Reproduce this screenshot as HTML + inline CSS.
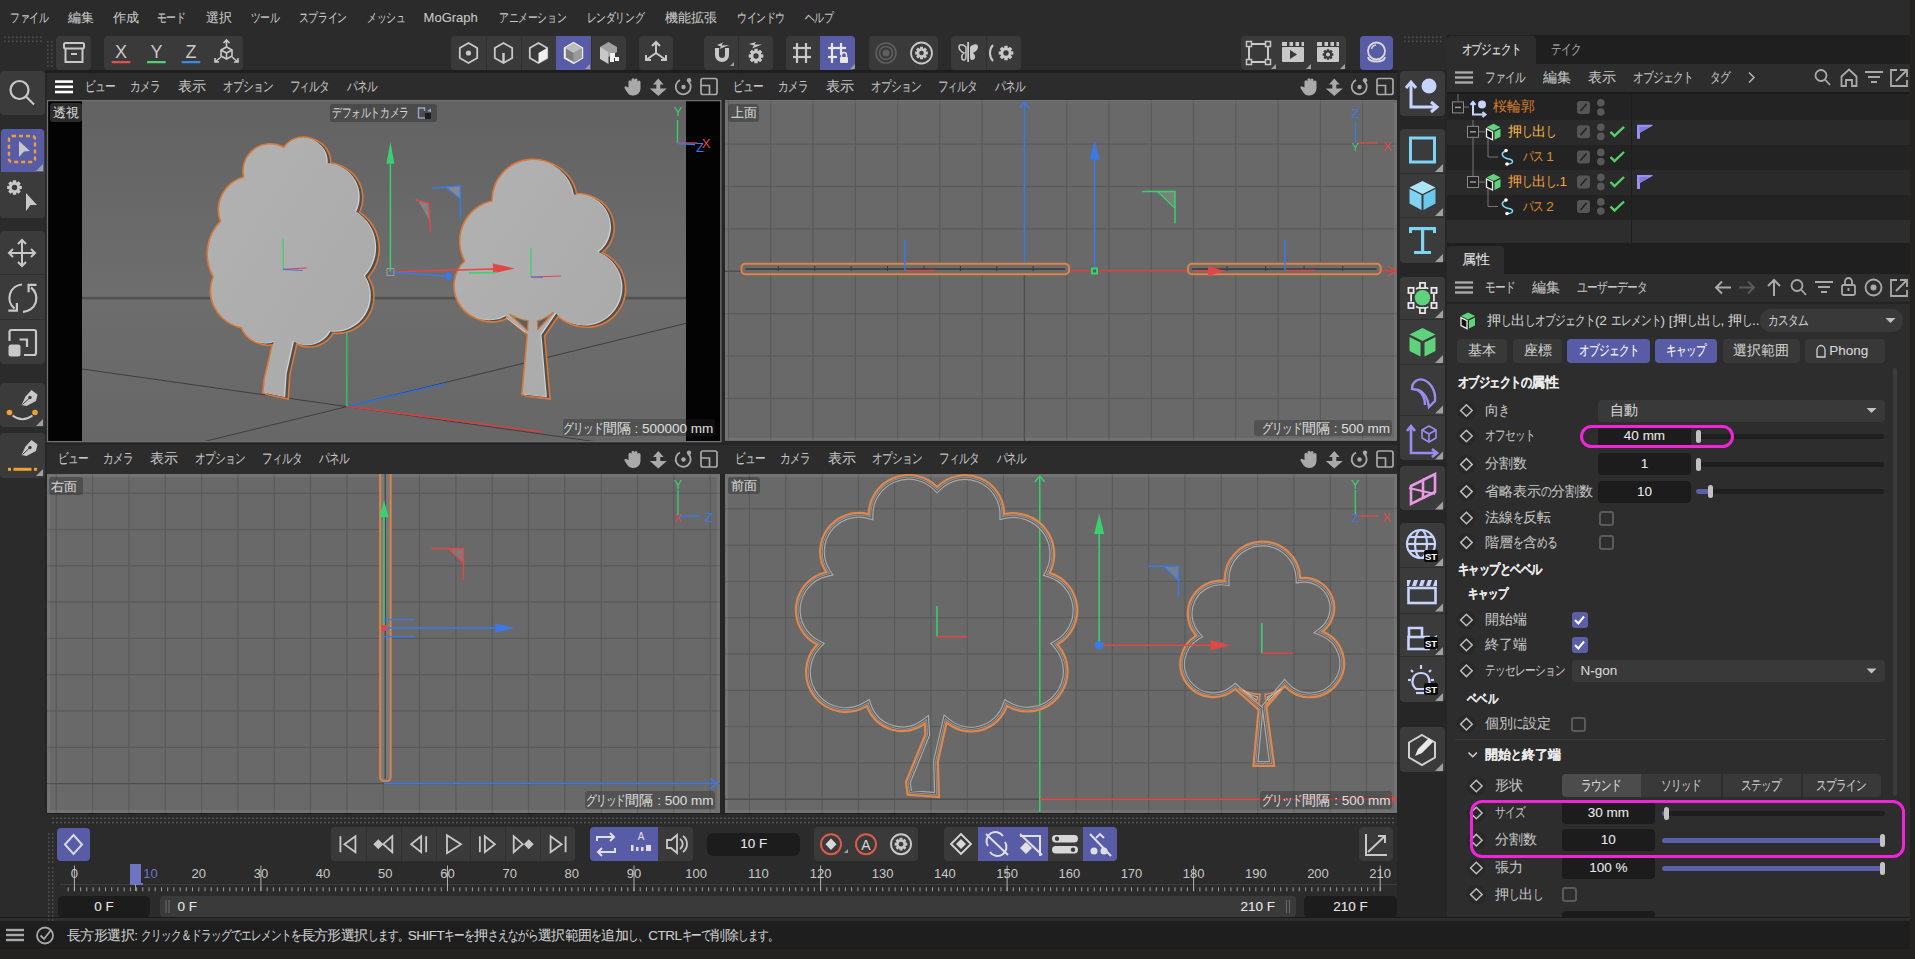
<!DOCTYPE html><html><head><meta charset="utf-8"><style>
html,body{margin:0;padding:0;width:1915px;height:959px;overflow:hidden;background:#2b2b2b;}
body{position:relative;font-family:"Liberation Sans",sans-serif;}
.t{position:absolute;height:20px;line-height:20px;white-space:nowrap;-webkit-text-stroke:0.08px currentColor;}
.kc{display:inline-block;font-style:normal;width:0.74em;transform:scaleX(0.76);transform-origin:0 50%;}
.b .kc{width:0.78em;transform:scaleX(0.8);}
svg.ov{position:absolute;left:0;top:0;}
</style></head><body>

<div class="t " style="left:10px;top:7.5px;color:#c9c9c9;font-size:13px;"><i class="kc">フ</i><i class="kc">ァ</i><i class="kc">イ</i><i class="kc">ル</i></div>
<div class="t " style="left:67.7px;top:7.5px;color:#c9c9c9;font-size:13px;">編集</div>
<div class="t " style="left:112.8px;top:7.5px;color:#c9c9c9;font-size:13px;">作成</div>
<div class="t " style="left:156.6px;top:7.5px;color:#c9c9c9;font-size:13px;"><i class="kc">モ</i><i class="kc">ー</i><i class="kc">ド</i></div>
<div class="t " style="left:205.5px;top:7.5px;color:#c9c9c9;font-size:13px;">選択</div>
<div class="t " style="left:250.6px;top:7.5px;color:#c9c9c9;font-size:13px;"><i class="kc">ツ</i><i class="kc">ー</i><i class="kc">ル</i></div>
<div class="t " style="left:298.7px;top:7.5px;color:#c9c9c9;font-size:13px;"><i class="kc">ス</i><i class="kc">プ</i><i class="kc">ラ</i><i class="kc">イ</i><i class="kc">ン</i></div>
<div class="t " style="left:367px;top:7.5px;color:#c9c9c9;font-size:13px;"><i class="kc">メ</i><i class="kc">ッ</i><i class="kc">シ</i><i class="kc">ュ</i></div>
<div class="t " style="left:423.6px;top:7.5px;color:#c9c9c9;font-size:13px;">MoGraph</div>
<div class="t " style="left:499px;top:7.5px;color:#c9c9c9;font-size:13px;"><i class="kc">ア</i><i class="kc">ニ</i><i class="kc">メ</i><i class="kc">ー</i><i class="kc">シ</i><i class="kc">ョ</i><i class="kc">ン</i></div>
<div class="t " style="left:586.6px;top:7.5px;color:#c9c9c9;font-size:13px;"><i class="kc">レ</i><i class="kc">ン</i><i class="kc">ダ</i><i class="kc">リ</i><i class="kc">ン</i><i class="kc">グ</i></div>
<div class="t " style="left:665px;top:7.5px;color:#c9c9c9;font-size:13px;">機能拡張</div>
<div class="t " style="left:737px;top:7.5px;color:#c9c9c9;font-size:13px;"><i class="kc">ウ</i><i class="kc">イ</i><i class="kc">ン</i><i class="kc">ド</i><i class="kc">ウ</i></div>
<div class="t " style="left:804.7px;top:7.5px;color:#c9c9c9;font-size:13px;"><i class="kc">ヘ</i><i class="kc">ル</i><i class="kc">プ</i></div>
<div style="position:absolute;left:56px;top:36px;width:35px;height:34px;background:#3a3a3a;border-radius:4px;"></div>
<div style="position:absolute;left:104px;top:36px;width:139px;height:34px;background:#3a3a3a;border-radius:4px;"></div>
<div style="position:absolute;left:451px;top:36px;width:175px;height:34px;background:#3a3a3a;border-radius:4px;"></div>
<div style="position:absolute;left:556px;top:36px;width:35px;height:34px;background:#585ca6;"></div>
<div style="position:absolute;left:639px;top:36px;width:34px;height:34px;background:#3a3a3a;border-radius:4px;"></div>
<div style="position:absolute;left:704px;top:36px;width:69px;height:34px;background:#3a3a3a;border-radius:4px;"></div>
<div style="position:absolute;left:786px;top:36px;width:69px;height:34px;background:#3a3a3a;border-radius:4px;"></div>
<div style="position:absolute;left:820px;top:36px;width:35px;height:34px;background:#585ca6;border-radius:0 4px 4px 0;"></div>
<div style="position:absolute;left:869px;top:36px;width:69px;height:34px;background:#3a3a3a;border-radius:4px;"></div>
<div style="position:absolute;left:951px;top:36px;width:70px;height:34px;background:#3a3a3a;border-radius:4px;"></div>
<div style="position:absolute;left:1241px;top:36px;width:105px;height:34px;background:#3a3a3a;border-radius:4px;"></div>
<div style="position:absolute;left:1360px;top:36px;width:33px;height:34px;background:#585ca6;border-radius:4px;"></div>
<div style="position:absolute;left:45px;top:70px;width:1355px;height:3px;background:#1e1e1e;"></div>
<div style="position:absolute;left:0px;top:71px;width:45px;height:44px;background:#3b3b3b;border-radius:4px;"></div>
<div style="position:absolute;left:0px;top:129px;width:45px;height:88.5px;background:#3b3b3b;border-radius:4px;"></div>
<div style="position:absolute;left:1px;top:129px;width:43px;height:43px;background:#585ca6;border-radius:4px 4px 0 0;"></div>
<div style="position:absolute;left:0px;top:231px;width:45px;height:133.2px;background:#3b3b3b;border-radius:4px;"></div>
<div style="position:absolute;left:0px;top:383px;width:45px;height:44.39999999999998px;background:#3b3b3b;border-radius:4px;"></div>
<div style="position:absolute;left:0px;top:433px;width:45px;height:45px;background:#3b3b3b;border-radius:4px;"></div>
<div style="position:absolute;left:45px;top:73px;width:1355px;height:745px;background:#262626;"></div>
<div style="position:absolute;left:47px;top:73px;width:1350px;height:27px;background:#2c2c2c;"></div>
<div style="position:absolute;left:47px;top:445px;width:1350px;height:29px;background:#2c2c2c;"></div>
<div class="t " style="left:85.2px;top:76.5px;color:#c4c4c4;font-size:13.5px;"><i class="kc">ビ</i><i class="kc">ュ</i><i class="kc">ー</i></div>
<div class="t " style="left:130.3px;top:76.5px;color:#c4c4c4;font-size:13.5px;"><i class="kc">カ</i><i class="kc">メ</i><i class="kc">ラ</i></div>
<div class="t " style="left:178px;top:76.5px;color:#c4c4c4;font-size:13.5px;">表示</div>
<div class="t " style="left:222.6px;top:76.5px;color:#c4c4c4;font-size:13.5px;"><i class="kc">オ</i><i class="kc">プ</i><i class="kc">シ</i><i class="kc">ョ</i><i class="kc">ン</i></div>
<div class="t " style="left:289.5px;top:76.5px;color:#c4c4c4;font-size:13.5px;"><i class="kc">フ</i><i class="kc">ィ</i><i class="kc">ル</i><i class="kc">タ</i></div>
<div class="t " style="left:347px;top:76.5px;color:#c4c4c4;font-size:13.5px;"><i class="kc">パ</i><i class="kc">ネ</i><i class="kc">ル</i></div>
<div class="t " style="left:733.2px;top:76.5px;color:#c4c4c4;font-size:13.5px;"><i class="kc">ビ</i><i class="kc">ュ</i><i class="kc">ー</i></div>
<div class="t " style="left:778.3px;top:76.5px;color:#c4c4c4;font-size:13.5px;"><i class="kc">カ</i><i class="kc">メ</i><i class="kc">ラ</i></div>
<div class="t " style="left:826px;top:76.5px;color:#c4c4c4;font-size:13.5px;">表示</div>
<div class="t " style="left:870.6px;top:76.5px;color:#c4c4c4;font-size:13.5px;"><i class="kc">オ</i><i class="kc">プ</i><i class="kc">シ</i><i class="kc">ョ</i><i class="kc">ン</i></div>
<div class="t " style="left:937.5px;top:76.5px;color:#c4c4c4;font-size:13.5px;"><i class="kc">フ</i><i class="kc">ィ</i><i class="kc">ル</i><i class="kc">タ</i></div>
<div class="t " style="left:995px;top:76.5px;color:#c4c4c4;font-size:13.5px;"><i class="kc">パ</i><i class="kc">ネ</i><i class="kc">ル</i></div>
<div class="t " style="left:57.6px;top:448.5px;color:#c4c4c4;font-size:13.5px;"><i class="kc">ビ</i><i class="kc">ュ</i><i class="kc">ー</i></div>
<div class="t " style="left:102.70000000000002px;top:448.5px;color:#c4c4c4;font-size:13.5px;"><i class="kc">カ</i><i class="kc">メ</i><i class="kc">ラ</i></div>
<div class="t " style="left:150.4px;top:448.5px;color:#c4c4c4;font-size:13.5px;">表示</div>
<div class="t " style="left:195.0px;top:448.5px;color:#c4c4c4;font-size:13.5px;"><i class="kc">オ</i><i class="kc">プ</i><i class="kc">シ</i><i class="kc">ョ</i><i class="kc">ン</i></div>
<div class="t " style="left:261.9px;top:448.5px;color:#c4c4c4;font-size:13.5px;"><i class="kc">フ</i><i class="kc">ィ</i><i class="kc">ル</i><i class="kc">タ</i></div>
<div class="t " style="left:319.4px;top:448.5px;color:#c4c4c4;font-size:13.5px;"><i class="kc">パ</i><i class="kc">ネ</i><i class="kc">ル</i></div>
<div class="t " style="left:734.7px;top:448.5px;color:#c4c4c4;font-size:13.5px;"><i class="kc">ビ</i><i class="kc">ュ</i><i class="kc">ー</i></div>
<div class="t " style="left:779.8px;top:448.5px;color:#c4c4c4;font-size:13.5px;"><i class="kc">カ</i><i class="kc">メ</i><i class="kc">ラ</i></div>
<div class="t " style="left:827.5px;top:448.5px;color:#c4c4c4;font-size:13.5px;">表示</div>
<div class="t " style="left:872.1px;top:448.5px;color:#c4c4c4;font-size:13.5px;"><i class="kc">オ</i><i class="kc">プ</i><i class="kc">シ</i><i class="kc">ョ</i><i class="kc">ン</i></div>
<div class="t " style="left:939.0px;top:448.5px;color:#c4c4c4;font-size:13.5px;"><i class="kc">フ</i><i class="kc">ィ</i><i class="kc">ル</i><i class="kc">タ</i></div>
<div class="t " style="left:996.5px;top:448.5px;color:#c4c4c4;font-size:13.5px;"><i class="kc">パ</i><i class="kc">ネ</i><i class="kc">ル</i></div>
<div style="position:absolute;left:1397px;top:70px;width:50px;height:850px;background:#262626;"></div>
<div style="position:absolute;left:1400px;top:71px;width:45px;height:44.5px;background:#3b3b3b;border-radius:4px;"></div>
<div style="position:absolute;left:1400px;top:129px;width:45px;height:134px;background:#3b3b3b;border-radius:4px;"></div>
<div style="position:absolute;left:1400px;top:277px;width:45px;height:183.39999999999998px;background:#3b3b3b;border-radius:4px;"></div>
<div style="position:absolute;left:1400px;top:466px;width:45px;height:44.39999999999998px;background:#3b3b3b;border-radius:4px;"></div>
<div style="position:absolute;left:1400px;top:523px;width:45px;height:179px;background:#3b3b3b;border-radius:4px;"></div>
<div style="position:absolute;left:1400px;top:727px;width:45px;height:45px;background:#3b3b3b;border-radius:4px;"></div>
<div style="position:absolute;left:1400px;top:173px;width:45px;height:1px;background:#2e2e2e;"></div>
<div style="position:absolute;left:1400px;top:217px;width:45px;height:1px;background:#2e2e2e;"></div>
<div style="position:absolute;left:1400px;top:319px;width:45px;height:1px;background:#2e2e2e;"></div>
<div style="position:absolute;left:1400px;top:364px;width:45px;height:1px;background:#2e2e2e;"></div>
<div style="position:absolute;left:1400px;top:414.6px;width:45px;height:1px;background:#2e2e2e;"></div>
<div style="position:absolute;left:1400px;top:567px;width:45px;height:1px;background:#2e2e2e;"></div>
<div style="position:absolute;left:1400px;top:612.5px;width:45px;height:1px;background:#2e2e2e;"></div>
<div style="position:absolute;left:1400px;top:656px;width:45px;height:1px;background:#2e2e2e;"></div>
<div style="position:absolute;left:1447px;top:35px;width:463px;height:29px;background:#1f1f1f;"></div>
<div style="position:absolute;left:1447px;top:36px;width:89px;height:28px;background:#2d2d2d;border-radius:4px 4px 0 0;"></div>
<div class="t " style="left:1461.5px;top:39.5px;color:#e6e6e6;font-size:13.5px;"><i class="kc">オ</i><i class="kc">ブ</i><i class="kc">ジ</i><i class="kc">ェ</i><i class="kc">ク</i><i class="kc">ト</i></div>
<div class="t " style="left:1551px;top:39.5px;color:#a8a8a8;font-size:13.5px;"><i class="kc">テ</i><i class="kc">イ</i><i class="kc">ク</i></div>
<div style="position:absolute;left:1447px;top:64px;width:463px;height:28px;background:#2d2d2d;"></div>
<div style="position:absolute;left:1910px;top:0px;width:5px;height:959px;background:#232221;"></div>
<div class="t " style="left:1484.6px;top:67.5px;color:#c4c4c4;font-size:13.5px;"><i class="kc">フ</i><i class="kc">ァ</i><i class="kc">イ</i><i class="kc">ル</i></div>
<div class="t " style="left:1543px;top:67.5px;color:#c4c4c4;font-size:13.5px;">編集</div>
<div class="t " style="left:1587.8px;top:67.5px;color:#c4c4c4;font-size:13.5px;">表示</div>
<div class="t " style="left:1632.6px;top:67.5px;color:#c4c4c4;font-size:13.5px;"><i class="kc">オ</i><i class="kc">ブ</i><i class="kc">ジ</i><i class="kc">ェ</i><i class="kc">ク</i><i class="kc">ト</i></div>
<div class="t " style="left:1710px;top:67.5px;color:#c4c4c4;font-size:13.5px;"><i class="kc">タ</i><i class="kc">グ</i></div>
<div style="position:absolute;left:1447px;top:92px;width:463px;height:1.5px;background:#1b1b1b;"></div>
<div style="position:absolute;left:1447px;top:93.5px;width:463px;height:26.0px;background:#232323;"></div>
<div style="position:absolute;left:1447px;top:119.5px;width:463px;height:25.0px;background:#2a2a2a;"></div>
<div style="position:absolute;left:1447px;top:144.5px;width:463px;height:25.0px;background:#232323;"></div>
<div style="position:absolute;left:1447px;top:169.5px;width:463px;height:25.0px;background:#2a2a2a;"></div>
<div style="position:absolute;left:1447px;top:194.5px;width:463px;height:25.0px;background:#232323;"></div>
<div style="position:absolute;left:1447px;top:219.5px;width:463px;height:23.5px;background:#2d2d2d;"></div>
<div style="position:absolute;left:1631px;top:93.5px;width:1px;height:149.5px;background:#1e1e1e;"></div>
<div style="position:absolute;left:1447px;top:243px;width:463px;height:3px;background:#1e1e1e;"></div>
<div class="t " style="left:1492.7px;top:97.4px;color:#cf7a30;font-size:13.5px;">桜輪郭</div>
<div class="t " style="left:1507.7px;top:121.80000000000001px;color:#f0b84a;font-size:13.5px;">押<i class="kc">し</i>出<i class="kc">し</i></div>
<div class="t " style="left:1522.6px;top:147px;color:#d9892e;font-size:13.5px;"><i class="kc">パ</i><i class="kc">ス</i> 1</div>
<div class="t " style="left:1507.7px;top:172px;color:#f0a340;font-size:13.5px;">押<i class="kc">し</i>出<i class="kc">し</i>.1</div>
<div class="t " style="left:1522.6px;top:196.5px;color:#d9892e;font-size:13.5px;"><i class="kc">パ</i><i class="kc">ス</i> 2</div>
<div style="position:absolute;left:1447px;top:246px;width:463px;height:28px;background:#1f1f1f;"></div>
<div style="position:absolute;left:1447px;top:246px;width:57px;height:28px;background:#2d2d2d;border-radius:4px 4px 0 0;"></div>
<div class="t " style="left:1461.5px;top:249.5px;color:#e6e6e6;font-size:13.5px;">属性</div>
<div style="position:absolute;left:1447px;top:274px;width:463px;height:643px;background:#2d2d2d;"></div>
<div style="position:absolute;left:1447px;top:302px;width:463px;height:1.5px;background:#232323;"></div>
<div class="t " style="left:1484.6px;top:277.5px;color:#c4c4c4;font-size:13.5px;"><i class="kc">モ</i><i class="kc">ー</i><i class="kc">ド</i></div>
<div class="t " style="left:1532px;top:277.5px;color:#c4c4c4;font-size:13.5px;">編集</div>
<div class="t " style="left:1577px;top:277.5px;color:#c4c4c4;font-size:13.5px;"><i class="kc">ユ</i><i class="kc">ー</i><i class="kc">ザ</i><i class="kc">ー</i><i class="kc">デ</i><i class="kc">ー</i><i class="kc">タ</i></div>
<div class="t " style="left:1487px;top:310.6px;color:#cfcfcf;font-size:13.5px;">押<i class="kc">し</i>出<i class="kc">し</i><i class="kc">オ</i><i class="kc">ブ</i><i class="kc">ジ</i><i class="kc">ェ</i><i class="kc">ク</i><i class="kc">ト</i>(2 <i class="kc">エ</i><i class="kc">レ</i><i class="kc">メ</i><i class="kc">ン</i><i class="kc">ト</i>) [押<i class="kc">し</i>出<i class="kc">し</i>, 押<i class="kc">し</i>..</div>
<div style="position:absolute;left:1760px;top:309px;width:143px;height:23px;background:#393939;border-radius:11px;"></div>
<div class="t " style="left:1768.3px;top:310.5px;color:#d0d0d0;font-size:13.5px;"><i class="kc">カ</i><i class="kc">ス</i><i class="kc">タ</i><i class="kc">ム</i></div>
<div style="position:absolute;left:1457.4px;top:339px;width:49.59999999999991px;height:24px;background:#383838;border-radius:4px;"></div>
<div class="t" style="left:1457.4px;width:49.59999999999991px;text-align:center;top:341px;color:#d0d0d0;font-size:13.5px;">基本</div>
<div style="position:absolute;left:1512.6px;top:339px;width:49.90000000000009px;height:24px;background:#383838;border-radius:4px;"></div>
<div class="t" style="left:1512.6px;width:49.90000000000009px;text-align:center;top:341px;color:#d0d0d0;font-size:13.5px;">座標</div>
<div style="position:absolute;left:1567.4px;top:339px;width:82.29999999999995px;height:24px;background:#585ca6;border-radius:4px;"></div>
<div class="t" style="left:1567.4px;width:82.29999999999995px;text-align:center;top:341px;color:#ffffff;font-size:13.5px;"><i class="kc">オ</i><i class="kc">ブ</i><i class="kc">ジ</i><i class="kc">ェ</i><i class="kc">ク</i><i class="kc">ト</i></div>
<div style="position:absolute;left:1654.8px;top:339px;width:62.5px;height:24px;background:#585ca6;border-radius:4px;"></div>
<div class="t" style="left:1654.8px;width:62.5px;text-align:center;top:341px;color:#ffffff;font-size:13.5px;"><i class="kc">キ</i><i class="kc">ャ</i><i class="kc">ッ</i><i class="kc">プ</i></div>
<div style="position:absolute;left:1722.7px;top:339px;width:76.89999999999986px;height:24px;background:#383838;border-radius:4px;"></div>
<div class="t" style="left:1722.7px;width:76.89999999999986px;text-align:center;top:341px;color:#d0d0d0;font-size:13.5px;">選択範囲</div>
<div style="position:absolute;left:1805px;top:339px;width:79.59999999999991px;height:24px;background:#383838;border-radius:4px;"></div>
<div class="t" style="left:1813px;width:71.59999999999991px;text-align:center;top:341px;color:#d8d8d8;font-size:13.5px;">Phong</div>
<div style="position:absolute;left:1893px;top:368px;width:4px;height:428px;background:#3c3c3c;border-radius:2px;"></div>
<div class="t b" style="left:1457.5px;top:372.5px;color:#ebebeb;font-size:13.5px;font-weight:bold;"><i class="kc">オ</i><i class="kc">ブ</i><i class="kc">ジ</i><i class="kc">ェ</i><i class="kc">ク</i><i class="kc">ト</i><i class="kc">の</i>属性</div>
<div class="t " style="left:1485.4px;top:400.5px;color:#c4c4c4;font-size:13.5px;">向<i class="kc">き</i></div>
<div style="position:absolute;left:1598px;top:400px;width:286.5px;height:21.5px;background:#393939;border-radius:4px;"></div>
<div class="t " style="left:1609.5px;top:400.5px;color:#d8d8d8;font-size:13.5px;">自動</div>
<div class="t " style="left:1485.4px;top:426px;color:#c4c4c4;font-size:13.5px;"><i class="kc">オ</i><i class="kc">フ</i><i class="kc">セ</i><i class="kc">ッ</i><i class="kc">ト</i></div>
<div style="position:absolute;left:1598px;top:425px;width:93px;height:22px;background:#1c1c1c;border-radius:4px;"></div>
<div class="t" style="left:1598px;width:93px;text-align:center;top:426px;color:#e8e8e8;font-size:13.5px;">40 mm</div>
<div style="position:absolute;left:1696px;top:433.5px;width:188px;height:5px;background:#1e1e1e;border-radius:2.5px;"></div>
<div style="position:absolute;left:1696.0px;top:429.5px;width:5px;height:13px;background:#c2c2c2;border-radius:2.5px;"></div>
<div class="t " style="left:1485.4px;top:454.4px;color:#c4c4c4;font-size:13.5px;">分割数</div>
<div style="position:absolute;left:1598px;top:453.4px;width:93px;height:22px;background:#1c1c1c;border-radius:4px;"></div>
<div class="t" style="left:1598px;width:93px;text-align:center;top:454.4px;color:#e8e8e8;font-size:13.5px;">1</div>
<div style="position:absolute;left:1696px;top:461.9px;width:188px;height:5px;background:#1e1e1e;border-radius:2.5px;"></div>
<div style="position:absolute;left:1696.0px;top:457.9px;width:5px;height:13px;background:#c2c2c2;border-radius:2.5px;"></div>
<div class="t " style="left:1485.4px;top:481.6px;color:#c4c4c4;font-size:13.5px;">省略表示<i class="kc">の</i>分割数</div>
<div style="position:absolute;left:1598px;top:480.6px;width:93px;height:22px;background:#1c1c1c;border-radius:4px;"></div>
<div class="t" style="left:1598px;width:93px;text-align:center;top:481.6px;color:#e8e8e8;font-size:13.5px;">10</div>
<div style="position:absolute;left:1696px;top:489.1px;width:188px;height:5px;background:#1e1e1e;border-radius:2.5px;"></div>
<div style="position:absolute;left:1696px;top:489.1px;width:14px;height:5px;background:#5b5fa8;border-radius:2.5px;"></div>
<div style="position:absolute;left:1707.5px;top:485.1px;width:5px;height:13px;background:#c2c2c2;border-radius:2.5px;"></div>
<div class="t " style="left:1485.4px;top:508px;color:#c4c4c4;font-size:13.5px;">法線<i class="kc">を</i>反転</div>
<div style="position:absolute;left:1598.6px;top:510.5px;width:15px;height:15px;background:transparent;border:2px solid #5a5a5a;border-radius:3px;box-sizing:border-box;"></div>
<div class="t " style="left:1485.4px;top:532.6px;color:#c4c4c4;font-size:13.5px;">階層<i class="kc">を</i>含<i class="kc">め</i><i class="kc">る</i></div>
<div style="position:absolute;left:1598.6px;top:535.1px;width:15px;height:15px;background:transparent;border:2px solid #5a5a5a;border-radius:3px;box-sizing:border-box;"></div>
<div class="t b" style="left:1457.5px;top:559.8px;color:#ebebeb;font-size:13.5px;font-weight:bold;"><i class="kc">キ</i><i class="kc">ャ</i><i class="kc">ッ</i><i class="kc">プ</i><i class="kc">と</i><i class="kc">ベ</i><i class="kc">ベ</i><i class="kc">ル</i></div>
<div class="t b" style="left:1467.8px;top:584.2px;color:#ebebeb;font-size:13px;font-weight:bold;"><i class="kc">キ</i><i class="kc">ャ</i><i class="kc">ッ</i><i class="kc">プ</i></div>
<div class="t " style="left:1485.4px;top:610px;color:#c4c4c4;font-size:13.5px;">開始端</div>
<div style="position:absolute;left:1571.5px;top:612px;width:16px;height:16px;background:#5b5fa8;border-radius:3px;"></div>
<div class="t " style="left:1485.4px;top:635px;color:#c4c4c4;font-size:13.5px;">終了端</div>
<div style="position:absolute;left:1571.5px;top:637px;width:16px;height:16px;background:#5b5fa8;border-radius:3px;"></div>
<div class="t " style="left:1485.4px;top:660.8px;color:#c4c4c4;font-size:13.5px;"><i class="kc">テ</i><i class="kc">ッ</i><i class="kc">セ</i><i class="kc">レ</i><i class="kc">ー</i><i class="kc">シ</i><i class="kc">ョ</i><i class="kc">ン</i></div>
<div style="position:absolute;left:1571.5px;top:660px;width:313px;height:22px;background:#393939;border-radius:4px;"></div>
<div class="t " style="left:1580.5px;top:660.8px;color:#d8d8d8;font-size:13.5px;">N-gon</div>
<div class="t b" style="left:1467.3px;top:688.6px;color:#ebebeb;font-size:13px;font-weight:bold;"><i class="kc">ベ</i><i class="kc">ベ</i><i class="kc">ル</i></div>
<div class="t " style="left:1485.4px;top:714.2px;color:#c4c4c4;font-size:13.5px;">個別<i class="kc">に</i>設定</div>
<div style="position:absolute;left:1571px;top:716.7px;width:15px;height:15px;background:transparent;border:2px solid #5a5a5a;border-radius:3px;box-sizing:border-box;"></div>
<div style="position:absolute;left:1455px;top:739px;width:430px;height:1px;background:#3c3c3c;"></div>
<div class="t b" style="left:1485.4px;top:745.3px;color:#ebebeb;font-size:13px;font-weight:bold;">開始<i class="kc">と</i>終了端</div>
<div class="t " style="left:1495.3px;top:776px;color:#c4c4c4;font-size:13.5px;">形状</div>
<div style="position:absolute;left:1562.2px;top:774px;width:318.5px;height:22.5px;background:#393939;border-radius:4px;"></div>
<div style="position:absolute;left:1562.2px;top:774px;width:78.4px;height:22.5px;background:#4c4c4c;border-radius:4px 0 0 4px;"></div>
<div style="position:absolute;left:1721px;top:774px;width:1.5px;height:22.5px;background:#2d2d2d;"></div>
<div style="position:absolute;left:1801px;top:774px;width:1.5px;height:22.5px;background:#2d2d2d;"></div>
<div class="t" style="left:1562.2px;width:78.39999999999986px;text-align:center;top:776px;color:#e0e0e0;font-size:13.5px;"><i class="kc">ラ</i><i class="kc">ウ</i><i class="kc">ン</i><i class="kc">ド</i></div>
<div class="t" style="left:1640.6px;width:80.40000000000009px;text-align:center;top:776px;color:#d0d0d0;font-size:13.5px;"><i class="kc">ソ</i><i class="kc">リ</i><i class="kc">ッ</i><i class="kc">ド</i></div>
<div class="t" style="left:1721px;width:80px;text-align:center;top:776px;color:#d0d0d0;font-size:13.5px;"><i class="kc">ス</i><i class="kc">テ</i><i class="kc">ッ</i><i class="kc">プ</i></div>
<div class="t" style="left:1801px;width:79.70000000000005px;text-align:center;top:776px;color:#d0d0d0;font-size:13.5px;"><i class="kc">ス</i><i class="kc">プ</i><i class="kc">ラ</i><i class="kc">イ</i><i class="kc">ン</i></div>
<div class="t " style="left:1495.3px;top:803px;color:#c4c4c4;font-size:13.5px;"><i class="kc">サ</i><i class="kc">イ</i><i class="kc">ズ</i></div>
<div style="position:absolute;left:1562px;top:802px;width:92.70000000000005px;height:22px;background:#1c1c1c;border-radius:4px;"></div>
<div class="t" style="left:1562px;width:92.70000000000005px;text-align:center;top:803px;color:#e8e8e8;font-size:13.5px;">30 mm</div>
<div style="position:absolute;left:1662px;top:810.5px;width:222.5999999999999px;height:5px;background:#1e1e1e;border-radius:2.5px;"></div>
<div style="position:absolute;left:1662px;top:810.5px;width:4px;height:5px;background:#5b5fa8;border-radius:2.5px;"></div>
<div style="position:absolute;left:1663.5px;top:806.5px;width:5px;height:13px;background:#c2c2c2;border-radius:2.5px;"></div>
<div class="t " style="left:1495.3px;top:830.2px;color:#c4c4c4;font-size:13.5px;">分割数</div>
<div style="position:absolute;left:1562px;top:829.2px;width:92.70000000000005px;height:22px;background:#1c1c1c;border-radius:4px;"></div>
<div class="t" style="left:1562px;width:92.70000000000005px;text-align:center;top:830.2px;color:#e8e8e8;font-size:13.5px;">10</div>
<div style="position:absolute;left:1662px;top:837.7px;width:222.5999999999999px;height:5px;background:#1e1e1e;border-radius:2.5px;"></div>
<div style="position:absolute;left:1662px;top:837.7px;width:220px;height:5px;background:#5b5fa8;border-radius:2.5px;"></div>
<div style="position:absolute;left:1879.5px;top:833.7px;width:5px;height:13px;background:#c2c2c2;border-radius:2.5px;"></div>
<div class="t " style="left:1495.3px;top:858px;color:#c4c4c4;font-size:13.5px;">張力</div>
<div style="position:absolute;left:1562px;top:857px;width:92.70000000000005px;height:22px;background:#1c1c1c;border-radius:4px;"></div>
<div class="t" style="left:1562px;width:92.70000000000005px;text-align:center;top:858px;color:#e8e8e8;font-size:13.5px;">100 %</div>
<div style="position:absolute;left:1662px;top:865.5px;width:222.5999999999999px;height:5px;background:#1e1e1e;border-radius:2.5px;"></div>
<div style="position:absolute;left:1662px;top:865.5px;width:220px;height:5px;background:#5b5fa8;border-radius:2.5px;"></div>
<div style="position:absolute;left:1879.5px;top:861.5px;width:5px;height:13px;background:#c2c2c2;border-radius:2.5px;"></div>
<div class="t " style="left:1495.3px;top:884.5px;color:#c4c4c4;font-size:13.5px;">押<i class="kc">し</i>出<i class="kc">し</i></div>
<div style="position:absolute;left:1562px;top:887.0px;width:15px;height:15px;background:transparent;border:2px solid #5a5a5a;border-radius:3px;box-sizing:border-box;"></div>
<div style="position:absolute;left:1562px;top:911px;width:92.7px;height:6px;background:#1c1c1c;border-radius:4px 4px 0 0;"></div>
<div style="position:absolute;left:45px;top:813px;width:1352px;height:107px;background:#2b2b2b;"></div>
<div style="position:absolute;left:47px;top:813px;width:1350px;height:1px;background:#1e1e1e;"></div>
<div style="position:absolute;left:56.8px;top:827.6px;width:33.5px;height:33.8px;background:#585ca6;border-radius:4px;"></div>
<div style="position:absolute;left:331px;top:827.4px;width:244px;height:33.60000000000002px;background:#3a3a3a;border-radius:4px;"></div>
<div style="position:absolute;left:365.86px;top:827.4px;width:1px;height:33.6px;background:#313131;"></div>
<div style="position:absolute;left:400.72px;top:827.4px;width:1px;height:33.6px;background:#313131;"></div>
<div style="position:absolute;left:435.58px;top:827.4px;width:1px;height:33.6px;background:#313131;"></div>
<div style="position:absolute;left:470.44px;top:827.4px;width:1px;height:33.6px;background:#313131;"></div>
<div style="position:absolute;left:505.3px;top:827.4px;width:1px;height:33.6px;background:#313131;"></div>
<div style="position:absolute;left:540.16px;top:827.4px;width:1px;height:33.6px;background:#313131;"></div>
<div style="position:absolute;left:589.5px;top:827.4px;width:103.0px;height:33.60000000000002px;background:#3a3a3a;border-radius:4px;"></div>
<div style="position:absolute;left:589.5px;top:827.4px;width:68.5px;height:33.6px;background:#585ca6;border-radius:4px 0 0 4px;"></div>
<div style="position:absolute;left:707px;top:833px;width:93.4px;height:22.6px;background:#1c1c1c;border-radius:6px;"></div>
<div class="t" style="left:707px;width:93.39999999999998px;text-align:center;top:834.3px;color:#e8e8e8;font-size:13.5px;">10 F</div>
<div style="position:absolute;left:814px;top:827.4px;width:104px;height:33.60000000000002px;background:#3a3a3a;border-radius:4px;"></div>
<div style="position:absolute;left:944px;top:827.4px;width:173px;height:33.60000000000002px;background:#3a3a3a;border-radius:4px;"></div>
<div style="position:absolute;left:978px;top:827.4px;width:70px;height:33.6px;background:#585ca6;"></div>
<div style="position:absolute;left:1083px;top:827.4px;width:34px;height:33.6px;background:#585ca6;border-radius:0 4px 4px 0;"></div>
<div style="position:absolute;left:1359px;top:827.4px;width:34px;height:33.60000000000002px;background:#3a3a3a;border-radius:4px;"></div>
<div style="position:absolute;left:60px;top:884.2px;width:1337px;height:1px;background:#3e3e3e;"></div>
<div style="position:absolute;left:130.2px;top:864px;width:11px;height:20.7px;background:#6f74c0;"></div>
<div style="position:absolute;left:130.2px;top:883.2px;width:13px;height:1.8px;background:#6f74c0;"></div>
<div style="position:absolute;left:58px;top:896px;width:92px;height:22px;background:#1c1c1c;border-radius:5px;"></div>
<div class="t" style="left:58px;width:92px;text-align:center;top:897px;color:#e8e8e8;font-size:13.5px;">0 F</div>
<div style="position:absolute;left:160px;top:896px;width:1136px;height:21px;background:#3a3a3a;border-radius:4px;"></div>
<div class="t " style="left:177.5px;top:896.5px;color:#e8e8e8;font-size:13.5px;">0 F</div>
<div class="t" style="right:640px;top:896.5px;color:#e8e8e8;font-size:13.5px;">210 F</div>
<div style="position:absolute;left:1304px;top:896px;width:93px;height:22px;background:#1c1c1c;border-radius:5px;"></div>
<div class="t" style="left:1304px;width:93px;text-align:center;top:897px;color:#e8e8e8;font-size:13.5px;">210 F</div>
<div style="position:absolute;left:0px;top:917px;width:1910px;height:1.2px;background:#1c1c1c;"></div>
<div style="position:absolute;left:0px;top:918.2px;width:1910px;height:2.3px;background:#2e2e2e;"></div>
<div style="position:absolute;left:0px;top:920.5px;width:1910px;height:28px;background:#1e1e1e;"></div>
<div style="position:absolute;left:0px;top:948.5px;width:1915px;height:10.5px;background:#232221;"></div>
<div class="t " style="left:67px;top:925.5px;color:#cfcfcf;font-size:13.5px;letter-spacing:-0.53px;">長方形選択: <i class="kc">ク</i><i class="kc">リ</i><i class="kc">ッ</i><i class="kc">ク</i><i class="kc">＆</i><i class="kc">ド</i><i class="kc">ラ</i><i class="kc">ッ</i><i class="kc">グ</i><i class="kc">で</i><i class="kc">エ</i><i class="kc">レ</i><i class="kc">メ</i><i class="kc">ン</i><i class="kc">ト</i><i class="kc">を</i>長方形選択<i class="kc">し</i><i class="kc">ま</i><i class="kc">す</i><i class="kc">。</i>SHIFT<i class="kc">キ</i><i class="kc">ー</i><i class="kc">を</i>押<i class="kc">さ</i><i class="kc">え</i><i class="kc">な</i><i class="kc">が</i><i class="kc">ら</i>選択範囲<i class="kc">を</i>追加<i class="kc">し</i><i class="kc">、</i>CTRL<i class="kc">キ</i><i class="kc">ー</i><i class="kc">で</i>削除<i class="kc">し</i><i class="kc">ま</i><i class="kc">す</i><i class="kc">。</i></div>
<div style="position:absolute;left:485.5px;top:36px;width:1px;height:34px;background:#303030;"></div>
<div style="position:absolute;left:520.5px;top:36px;width:1px;height:34px;background:#303030;"></div>
<div style="position:absolute;left:590.5px;top:36px;width:1px;height:34px;background:#303030;"></div>
<div style="position:absolute;left:738px;top:36px;width:1px;height:34px;background:#303030;"></div>
<div style="position:absolute;left:985.5px;top:36px;width:1px;height:34px;background:#303030;"></div>
<div style="position:absolute;left:0px;top:274px;width:45px;height:1px;background:#303030;"></div>
<div style="position:absolute;left:0px;top:319px;width:45px;height:1px;background:#303030;"></div>
<svg class="ov" width="1915" height="959" viewBox="0 0 1915 959">
<defs>
<linearGradient id="sky" x1="0" y1="0" x2="0" y2="1"><stop offset="0" stop-color="#626262"/><stop offset="1" stop-color="#6e6e6e"/></linearGradient>
<linearGradient id="flr" x1="0" y1="0" x2="0" y2="1"><stop offset="0" stop-color="#6d6d6d"/><stop offset="1" stop-color="#676767"/></linearGradient>
<linearGradient id="face" x1="0" y1="0" x2="1" y2="1"><stop offset="0" stop-color="#b2b2b2"/><stop offset="1" stop-color="#a9a9a9"/></linearGradient>
<clipPath id="cTL"><rect x="48" y="101" width="672" height="340"/></clipPath>
<clipPath id="cTR"><rect x="725" y="100" width="672" height="341"/></clipPath>
<clipPath id="cBL"><rect x="47" y="474" width="673" height="339"/></clipPath>
<clipPath id="cBR"><rect x="725" y="474" width="672" height="339"/></clipPath>
<clipPath id="tbig"><path d="M868.7,514.3 A39.9,39.9 0 0 1 937.1,487.0 A39.1,39.1 0 0 1 1004.2,514.3 A40.8,40.8 0 0 1 1049.6,572.9 A39.2,39.2 0 0 1 1057.4,644.5 A40.2,40.2 0 0 1 1007.0,705.9 A38.0,38.0 0 0 1 946.7,722.6 L937.9,760.9 L938.9,797.1 L907.7,794.6 L905.9,782.2 L925.4,734.3 L924.7,723.6 A37.4,37.4 0 0 1 866.9,705.9 A39.8,39.8 0 0 1 817.2,644.5 A38.7,38.7 0 0 1 826.1,572.2 A38.6,38.6 0 0 1 868.7,514.3 Z"/></clipPath>
<clipPath id="tsmall"><path d="M1224.7,580.8 A37.8,37.8 0 1 1 1300.3,578.2 A29.9,29.9 0 0 1 1322.5,631.6 A34.0,34.0 0 1 1 1284.7,685.9 L1266.4,707.2 L1274.2,765.9 L1253.4,765.9 L1258.6,709.8 L1235.2,689.0 A33.2,33.2 0 1 1 1196.1,635.6 A33.1,33.1 0 0 1 1224.7,580.8 Z"/></clipPath>
</defs>
<g clip-path="url(#cTR)">
<rect x="725" y="100" width="672" height="341" fill="#696969"/>
<rect x="685.6" y="100" width="1.2" height="341" fill="#5a5a5a"/>
<rect x="727.8" y="100" width="1.2" height="341" fill="#5a5a5a"/>
<rect x="770.1" y="100" width="1.2" height="341" fill="#5a5a5a"/>
<rect x="812.4" y="100" width="1.2" height="341" fill="#5a5a5a"/>
<rect x="854.7" y="100" width="1.2" height="341" fill="#5a5a5a"/>
<rect x="897.0" y="100" width="1.2" height="341" fill="#5a5a5a"/>
<rect x="939.2" y="100" width="1.2" height="341" fill="#5a5a5a"/>
<rect x="981.5" y="100" width="1.2" height="341" fill="#5a5a5a"/>
<rect x="1023.8" y="100" width="1.2" height="341" fill="#5a5a5a"/>
<rect x="1066.1" y="100" width="1.2" height="341" fill="#5a5a5a"/>
<rect x="1108.4" y="100" width="1.2" height="341" fill="#5a5a5a"/>
<rect x="1150.6" y="100" width="1.2" height="341" fill="#5a5a5a"/>
<rect x="1192.9" y="100" width="1.2" height="341" fill="#5a5a5a"/>
<rect x="1235.2" y="100" width="1.2" height="341" fill="#5a5a5a"/>
<rect x="1277.5" y="100" width="1.2" height="341" fill="#5a5a5a"/>
<rect x="1319.8" y="100" width="1.2" height="341" fill="#5a5a5a"/>
<rect x="1362.0" y="100" width="1.2" height="341" fill="#5a5a5a"/>
<rect x="1404.3" y="100" width="1.2" height="341" fill="#5a5a5a"/>
<rect x="725" y="58.7" width="672" height="1.2" fill="#5a5a5a"/>
<rect x="725" y="101.1" width="672" height="1.2" fill="#5a5a5a"/>
<rect x="725" y="143.5" width="672" height="1.2" fill="#5a5a5a"/>
<rect x="725" y="185.9" width="672" height="1.2" fill="#5a5a5a"/>
<rect x="725" y="228.3" width="672" height="1.2" fill="#5a5a5a"/>
<rect x="725" y="270.7" width="672" height="1.2" fill="#5a5a5a"/>
<rect x="725" y="313.1" width="672" height="1.2" fill="#5a5a5a"/>
<rect x="725" y="355.5" width="672" height="1.2" fill="#5a5a5a"/>
<rect x="725" y="397.9" width="672" height="1.2" fill="#5a5a5a"/>
<rect x="725" y="440.3" width="672" height="1.2" fill="#5a5a5a"/>
<rect x="725" y="482.7" width="672" height="1.2" fill="#5a5a5a"/>
<rect x="726.5" y="101.5" width="669" height="338" fill="none" stroke="rgba(255,255,255,0.07)" stroke-width="3"/>
</g>
<g clip-path="url(#cBL)">
<rect x="47" y="474" width="673" height="339" fill="#696969"/>
<rect x="19.3" y="474" width="1.2" height="339" fill="#5a5a5a"/>
<rect x="55.6" y="474" width="1.2" height="339" fill="#5a5a5a"/>
<rect x="92.0" y="474" width="1.2" height="339" fill="#5a5a5a"/>
<rect x="128.3" y="474" width="1.2" height="339" fill="#5a5a5a"/>
<rect x="164.6" y="474" width="1.2" height="339" fill="#5a5a5a"/>
<rect x="201.0" y="474" width="1.2" height="339" fill="#5a5a5a"/>
<rect x="237.3" y="474" width="1.2" height="339" fill="#5a5a5a"/>
<rect x="273.6" y="474" width="1.2" height="339" fill="#5a5a5a"/>
<rect x="309.9" y="474" width="1.2" height="339" fill="#5a5a5a"/>
<rect x="346.3" y="474" width="1.2" height="339" fill="#5a5a5a"/>
<rect x="382.6" y="474" width="1.2" height="339" fill="#5a5a5a"/>
<rect x="418.9" y="474" width="1.2" height="339" fill="#5a5a5a"/>
<rect x="455.3" y="474" width="1.2" height="339" fill="#5a5a5a"/>
<rect x="491.6" y="474" width="1.2" height="339" fill="#5a5a5a"/>
<rect x="527.9" y="474" width="1.2" height="339" fill="#5a5a5a"/>
<rect x="564.2" y="474" width="1.2" height="339" fill="#5a5a5a"/>
<rect x="600.6" y="474" width="1.2" height="339" fill="#5a5a5a"/>
<rect x="636.9" y="474" width="1.2" height="339" fill="#5a5a5a"/>
<rect x="673.2" y="474" width="1.2" height="339" fill="#5a5a5a"/>
<rect x="709.6" y="474" width="1.2" height="339" fill="#5a5a5a"/>
<rect x="745.9" y="474" width="1.2" height="339" fill="#5a5a5a"/>
<rect x="47" y="456.3" width="673" height="1.2" fill="#5a5a5a"/>
<rect x="47" y="492.6" width="673" height="1.2" fill="#5a5a5a"/>
<rect x="47" y="528.9" width="673" height="1.2" fill="#5a5a5a"/>
<rect x="47" y="565.2" width="673" height="1.2" fill="#5a5a5a"/>
<rect x="47" y="601.5" width="673" height="1.2" fill="#5a5a5a"/>
<rect x="47" y="637.8" width="673" height="1.2" fill="#5a5a5a"/>
<rect x="47" y="674.1" width="673" height="1.2" fill="#5a5a5a"/>
<rect x="47" y="710.4" width="673" height="1.2" fill="#5a5a5a"/>
<rect x="47" y="746.7" width="673" height="1.2" fill="#5a5a5a"/>
<rect x="47" y="783.0" width="673" height="1.2" fill="#4e4e4e"/>
<rect x="47" y="819.3" width="673" height="1.2" fill="#5a5a5a"/>
<rect x="48.5" y="475.5" width="670" height="336" fill="none" stroke="rgba(255,255,255,0.07)" stroke-width="3"/>
</g>
<g clip-path="url(#cBR)">
<rect x="725" y="474" width="672" height="339" fill="#696969"/>
<rect x="712.5" y="474" width="1.2" height="339" fill="#5a5a5a"/>
<rect x="748.8" y="474" width="1.2" height="339" fill="#5a5a5a"/>
<rect x="785.1" y="474" width="1.2" height="339" fill="#5a5a5a"/>
<rect x="821.4" y="474" width="1.2" height="339" fill="#5a5a5a"/>
<rect x="857.7" y="474" width="1.2" height="339" fill="#5a5a5a"/>
<rect x="894.0" y="474" width="1.2" height="339" fill="#5a5a5a"/>
<rect x="930.3" y="474" width="1.2" height="339" fill="#5a5a5a"/>
<rect x="966.6" y="474" width="1.2" height="339" fill="#5a5a5a"/>
<rect x="1002.9" y="474" width="1.2" height="339" fill="#5a5a5a"/>
<rect x="1039.2" y="474" width="1.2" height="339" fill="#5a5a5a"/>
<rect x="1075.5" y="474" width="1.2" height="339" fill="#5a5a5a"/>
<rect x="1111.8" y="474" width="1.2" height="339" fill="#5a5a5a"/>
<rect x="1148.1" y="474" width="1.2" height="339" fill="#5a5a5a"/>
<rect x="1184.4" y="474" width="1.2" height="339" fill="#5a5a5a"/>
<rect x="1220.7" y="474" width="1.2" height="339" fill="#5a5a5a"/>
<rect x="1257.0" y="474" width="1.2" height="339" fill="#5a5a5a"/>
<rect x="1293.3" y="474" width="1.2" height="339" fill="#5a5a5a"/>
<rect x="1329.6" y="474" width="1.2" height="339" fill="#5a5a5a"/>
<rect x="1365.9" y="474" width="1.2" height="339" fill="#5a5a5a"/>
<rect x="1402.2" y="474" width="1.2" height="339" fill="#5a5a5a"/>
<rect x="725" y="435.6" width="672" height="1.2" fill="#5a5a5a"/>
<rect x="725" y="471.9" width="672" height="1.2" fill="#5a5a5a"/>
<rect x="725" y="508.2" width="672" height="1.2" fill="#5a5a5a"/>
<rect x="725" y="544.5" width="672" height="1.2" fill="#5a5a5a"/>
<rect x="725" y="580.8" width="672" height="1.2" fill="#5a5a5a"/>
<rect x="725" y="617.1" width="672" height="1.2" fill="#5a5a5a"/>
<rect x="725" y="653.4" width="672" height="1.2" fill="#5a5a5a"/>
<rect x="725" y="689.7" width="672" height="1.2" fill="#5a5a5a"/>
<rect x="725" y="726.0" width="672" height="1.2" fill="#5a5a5a"/>
<rect x="725" y="762.3" width="672" height="1.2" fill="#5a5a5a"/>
<rect x="725" y="798.6" width="672" height="1.2" fill="#5a5a5a"/>
<rect x="725" y="834.9" width="672" height="1.2" fill="#5a5a5a"/>
<rect x="726.5" y="475.5" width="669" height="336" fill="none" stroke="rgba(255,255,255,0.07)" stroke-width="3"/>
</g>
<g clip-path="url(#cTL)">
<rect x="47" y="100" width="675" height="198" fill="url(#sky)"/>
<rect x="47" y="298" width="675" height="143" fill="url(#flr)"/>
<rect x="47" y="296.8" width="675" height="2.6" fill="#525252"/>
<line x1="40" y1="363" x2="347.1" y2="406.6" stroke="#3f3f3f" stroke-width="1"/>
<line x1="347.1" y1="406.6" x2="190" y2="445" stroke="#3f3f3f" stroke-width="1"/>
<line x1="347.1" y1="406.6" x2="720" y2="315" stroke="#3f3f3f" stroke-width="1"/>
<line x1="347.1" y1="406.6" x2="640" y2="448" stroke="#3f3f3f" stroke-width="1"/>
<line x1="347.1" y1="406.6" x2="445.9" y2="383.6" stroke="#2f6ee0" stroke-width="1.5"/>
<line x1="347.1" y1="406.6" x2="542" y2="432" stroke="#d84040" stroke-width="1.5"/>
<line x1="346.8" y1="406.6" x2="346.8" y2="320" stroke="#2ecc6a" stroke-width="1.3"/>
<path d="M248.1,179.1 A26.5,26.5 0 0 1 287.5,149.9 A23.1,23.1 0 0 1 329.9,164.5 A33.3,33.3 0 0 1 358.5,212.6 A42.1,42.1 0 0 1 367.3,276.9 A36.0,36.0 0 0 1 332.8,332.3 A26.3,26.3 0 0 1 296.3,342.5 L289.0,374.7 L287.5,398.0 L267.1,393.7 L268.5,380.5 L277.3,342.5 A23.9,23.9 0 0 1 245.2,328.0 A36.3,36.3 0 0 1 217.5,278.3 A46.4,46.4 0 0 1 224.8,222.9 A33.1,33.1 0 0 1 248.1,179.1 Z" fill="none" stroke="#d8783a" stroke-width="3.2"/>
<path d="M244.6,177.6 A26.5,26.5 0 0 1 284.0,148.4 A23.1,23.1 0 0 1 326.4,163.0 A33.3,33.3 0 0 1 355.0,211.1 A42.1,42.1 0 0 1 363.8,275.4 A36.0,36.0 0 0 1 329.3,330.8 A26.3,26.3 0 0 1 292.8,341.0 L285.5,373.2 L284.0,396.5 L263.6,392.2 L265.0,379.0 L273.8,341.0 A23.9,23.9 0 0 1 241.7,326.5 A36.3,36.3 0 0 1 214.0,276.8 A46.4,46.4 0 0 1 221.3,221.4 A33.1,33.1 0 0 1 244.6,177.6 Z" fill="none" stroke="#d8783a" stroke-width="3.2"/>
<path d="M248.1,179.1 A26.5,26.5 0 0 1 287.5,149.9 A23.1,23.1 0 0 1 329.9,164.5 A33.3,33.3 0 0 1 358.5,212.6 A42.1,42.1 0 0 1 367.3,276.9 A36.0,36.0 0 0 1 332.8,332.3 A26.3,26.3 0 0 1 296.3,342.5 L289.0,374.7 L287.5,398.0 L267.1,393.7 L268.5,380.5 L277.3,342.5 A23.9,23.9 0 0 1 245.2,328.0 A36.3,36.3 0 0 1 217.5,278.3 A46.4,46.4 0 0 1 224.8,222.9 A33.1,33.1 0 0 1 248.1,179.1 Z" fill="#4f4f4f"/>
<path d="M245.8,178.2 A26.5,26.5 0 0 1 285.2,149.0 A23.1,23.1 0 0 1 327.6,163.6 A33.3,33.3 0 0 1 356.2,211.7 A42.1,42.1 0 0 1 365.0,276.0 A36.0,36.0 0 0 1 330.5,331.4 A26.3,26.3 0 0 1 294.0,341.6 L286.7,373.8 L285.2,397.1 L264.8,392.8 L266.2,379.6 L275.0,341.6 A23.9,23.9 0 0 1 242.9,327.1 A36.3,36.3 0 0 1 215.2,277.4 A46.4,46.4 0 0 1 222.5,222.0 A33.1,33.1 0 0 1 245.8,178.2 Z" fill="#d4d4d4"/>
<path d="M244.6,177.6 A26.5,26.5 0 0 1 284.0,148.4 A23.1,23.1 0 0 1 326.4,163.0 A33.3,33.3 0 0 1 355.0,211.1 A42.1,42.1 0 0 1 363.8,275.4 A36.0,36.0 0 0 1 329.3,330.8 A26.3,26.3 0 0 1 292.8,341.0 L285.5,373.2 L284.0,396.5 L263.6,392.2 L265.0,379.0 L273.8,341.0 A23.9,23.9 0 0 1 241.7,326.5 A36.3,36.3 0 0 1 214.0,276.8 A46.4,46.4 0 0 1 221.3,221.4 A33.1,33.1 0 0 1 244.6,177.6 Z" fill="url(#face)"/>
<path d="M496.3,203.0 A40.2,40.2 0 0 1 576.3,196.2 A31.9,31.9 0 0 1 600.7,253.1 A38.0,38.0 0 1 1 558.7,314.1 L543.8,335.8 L549.2,398.1 L526.2,395.4 L531.6,335.8 L508.5,316.8 A33.7,33.7 0 0 1 469.2,262.6 A40.5,40.5 0 0 1 496.3,203.0 Z" fill="none" stroke="#d8783a" stroke-width="3.2"/>
<path d="M492.8,201.5 A40.2,40.2 0 0 1 572.8,194.7 A31.9,31.9 0 0 1 597.2,251.6 A38.0,38.0 0 1 1 555.2,312.6 L540.3,334.3 L545.7,396.6 L522.7,393.9 L528.1,334.3 L505.0,315.3 A33.7,33.7 0 0 1 465.7,261.1 A40.5,40.5 0 0 1 492.8,201.5 Z" fill="none" stroke="#d8783a" stroke-width="3.2"/>
<path d="M496.3,203.0 A40.2,40.2 0 0 1 576.3,196.2 A31.9,31.9 0 0 1 600.7,253.1 A38.0,38.0 0 1 1 558.7,314.1 L543.8,335.8 L549.2,398.1 L526.2,395.4 L531.6,335.8 L508.5,316.8 A33.7,33.7 0 0 1 469.2,262.6 A40.5,40.5 0 0 1 496.3,203.0 Z" fill="#4f4f4f"/>
<path d="M494.0,202.1 A40.2,40.2 0 0 1 574.0,195.3 A31.9,31.9 0 0 1 598.4,252.2 A38.0,38.0 0 1 1 556.4,313.2 L541.5,334.9 L546.9,397.2 L523.9,394.5 L529.3,334.9 L506.2,315.9 A33.7,33.7 0 0 1 466.9,261.7 A40.5,40.5 0 0 1 494.0,202.1 Z" fill="#d4d4d4"/>
<path d="M492.8,201.5 A40.2,40.2 0 0 1 572.8,194.7 A31.9,31.9 0 0 1 597.2,251.6 A38.0,38.0 0 1 1 555.2,312.6 L540.3,334.3 L545.7,396.6 L522.7,393.9 L528.1,334.3 L505.0,315.3 A33.7,33.7 0 0 1 465.7,261.1 A40.5,40.5 0 0 1 492.8,201.5 Z" fill="url(#face)"/>
<path d="M510,314.5 Q520,320 528,320.7 L527.6,330.5 Z M553.5,312.5 Q545,319 537.5,321 L537.8,329.5 Z" fill="#5e5e5e" stroke="#c8743e" stroke-width="1.3" stroke-linejoin="round"/>
<path d="M506,317.5 L525,332" stroke="#d0d0d0" stroke-width="1"/>
<rect x="47" y="100" width="35" height="342" fill="#030303"/>
<rect x="686" y="100" width="35" height="342" fill="#030303"/>
</g>
<rect x="47.5" y="100.6" width="673.4" height="341" fill="none" stroke="#707070" stroke-width="1.3"/>
<rect x="55" y="80.3" width="18" height="2.6" fill="#ffffff"/>
<rect x="55" y="85.5" width="18" height="2.6" fill="#ffffff"/>
<rect x="55" y="90.7" width="18" height="2.6" fill="#ffffff"/>
<g transform="translate(624,77.5)" fill="#a9a9a9"><path d="M4.5,10 V4.2 a1.5,1.5 0 0 1 3,0 V8.5 V2.2 a1.5,1.5 0 0 1 3,0 V8.5 V2.6 a1.5,1.5 0 0 1 3,0 V8.5 V4.4 a1.5,1.5 0 0 1 3,0 V11 a7,7 0 0 1 -7,7 h-1 a6,6 0 0 1 -5,-2.8 L0.6,10.8 a1.3,1.3 0 0 1 2.1,-1.5 Z"/></g>
<g transform="translate(650,78.5)" fill="#a9a9a9"><path d="M8.3,0 L13.6,6 H10.3 V10 H16.8 L8.3,17.5 L-0.2,10 H6.3 V6 H3 Z"/></g>
<g transform="translate(675,77.5)"><path d="M13.5,4 A7.5,7.5 0 1 1 5,2.5" fill="none" stroke="#a9a9a9" stroke-width="1.8"/><circle cx="8.5" cy="9.5" r="2.2" fill="#a9a9a9"/><circle cx="14" cy="2.8" r="2.2" fill="#a9a9a9"/></g>
<g transform="translate(700,77.5)" fill="none" stroke="#a9a9a9" stroke-width="1.7"><rect x="1" y="1" width="16" height="16" rx="2"/><path d="M1,8 H9.5 V17"/></g>
<g transform="translate(1300,77.5)" fill="#a9a9a9"><path d="M4.5,10 V4.2 a1.5,1.5 0 0 1 3,0 V8.5 V2.2 a1.5,1.5 0 0 1 3,0 V8.5 V2.6 a1.5,1.5 0 0 1 3,0 V8.5 V4.4 a1.5,1.5 0 0 1 3,0 V11 a7,7 0 0 1 -7,7 h-1 a6,6 0 0 1 -5,-2.8 L0.6,10.8 a1.3,1.3 0 0 1 2.1,-1.5 Z"/></g>
<g transform="translate(1326,78.5)" fill="#a9a9a9"><path d="M8.3,0 L13.6,6 H10.3 V10 H16.8 L8.3,17.5 L-0.2,10 H6.3 V6 H3 Z"/></g>
<g transform="translate(1351,77.5)"><path d="M13.5,4 A7.5,7.5 0 1 1 5,2.5" fill="none" stroke="#a9a9a9" stroke-width="1.8"/><circle cx="8.5" cy="9.5" r="2.2" fill="#a9a9a9"/><circle cx="14" cy="2.8" r="2.2" fill="#a9a9a9"/></g>
<g transform="translate(1376,77.5)" fill="none" stroke="#a9a9a9" stroke-width="1.7"><rect x="1" y="1" width="16" height="16" rx="2"/><path d="M1,8 H9.5 V17"/></g>
<g transform="translate(624,450)" fill="#a9a9a9"><path d="M4.5,10 V4.2 a1.5,1.5 0 0 1 3,0 V8.5 V2.2 a1.5,1.5 0 0 1 3,0 V8.5 V2.6 a1.5,1.5 0 0 1 3,0 V8.5 V4.4 a1.5,1.5 0 0 1 3,0 V11 a7,7 0 0 1 -7,7 h-1 a6,6 0 0 1 -5,-2.8 L0.6,10.8 a1.3,1.3 0 0 1 2.1,-1.5 Z"/></g>
<g transform="translate(650,451)" fill="#a9a9a9"><path d="M8.3,0 L13.6,6 H10.3 V10 H16.8 L8.3,17.5 L-0.2,10 H6.3 V6 H3 Z"/></g>
<g transform="translate(675,450)"><path d="M13.5,4 A7.5,7.5 0 1 1 5,2.5" fill="none" stroke="#a9a9a9" stroke-width="1.8"/><circle cx="8.5" cy="9.5" r="2.2" fill="#a9a9a9"/><circle cx="14" cy="2.8" r="2.2" fill="#a9a9a9"/></g>
<g transform="translate(700,450)" fill="none" stroke="#a9a9a9" stroke-width="1.7"><rect x="1" y="1" width="16" height="16" rx="2"/><path d="M1,8 H9.5 V17"/></g>
<g transform="translate(1300,450)" fill="#a9a9a9"><path d="M4.5,10 V4.2 a1.5,1.5 0 0 1 3,0 V8.5 V2.2 a1.5,1.5 0 0 1 3,0 V8.5 V2.6 a1.5,1.5 0 0 1 3,0 V8.5 V4.4 a1.5,1.5 0 0 1 3,0 V11 a7,7 0 0 1 -7,7 h-1 a6,6 0 0 1 -5,-2.8 L0.6,10.8 a1.3,1.3 0 0 1 2.1,-1.5 Z"/></g>
<g transform="translate(1326,451)" fill="#a9a9a9"><path d="M8.3,0 L13.6,6 H10.3 V10 H16.8 L8.3,17.5 L-0.2,10 H6.3 V6 H3 Z"/></g>
<g transform="translate(1351,450)"><path d="M13.5,4 A7.5,7.5 0 1 1 5,2.5" fill="none" stroke="#a9a9a9" stroke-width="1.8"/><circle cx="8.5" cy="9.5" r="2.2" fill="#a9a9a9"/><circle cx="14" cy="2.8" r="2.2" fill="#a9a9a9"/></g>
<g transform="translate(1376,450)" fill="none" stroke="#a9a9a9" stroke-width="1.7"><rect x="1" y="1" width="16" height="16" rx="2"/><path d="M1,8 H9.5 V17"/></g>
<line x1="677.5" y1="120" x2="677.5" y2="143" stroke="#3ad070" stroke-width="1.3"/>
<line x1="677.5" y1="143" x2="697" y2="143" stroke="#e04848" stroke-width="1.3"/>
<line x1="677.5" y1="143.5" x2="695" y2="144.5" stroke="#3a7ae8" stroke-width="1.3"/>
<text x="678" y="116" fill="#3ad070" font-family="Liberation Sans" font-size="13" text-anchor="middle">Y</text>
<text x="700" y="152" fill="#3a7ae8" font-family="Liberation Sans" font-size="13" text-anchor="middle">Z</text>
<text x="706" y="148" fill="#e04848" font-family="Liberation Sans" font-size="13" text-anchor="middle">X</text>
<line x1="1355.5" y1="122" x2="1355.5" y2="143" stroke="#3a7ae8" stroke-width="1.3"/>
<line x1="1357" y1="143" x2="1378" y2="143" stroke="#e04848" stroke-width="1.3"/>
<text x="1355.5" y="118" fill="#3a7ae8" font-family="Liberation Sans" font-size="13" text-anchor="middle">Z</text>
<text x="1355.5" y="151" fill="#3ad070" font-family="Liberation Sans" font-size="11" text-anchor="middle">Y</text>
<text x="1387.3" y="151" fill="#e04848" font-family="Liberation Sans" font-size="13" text-anchor="middle">X</text>
<line x1="678" y1="490" x2="678" y2="515" stroke="#3ad070" stroke-width="1.3"/>
<line x1="680" y1="516" x2="700.7" y2="516" stroke="#3a7ae8" stroke-width="1.3"/>
<text x="678" y="489" fill="#3ad070" font-family="Liberation Sans" font-size="13" text-anchor="middle">Y</text>
<text x="678" y="522" fill="#e04848" font-family="Liberation Sans" font-size="11" text-anchor="middle">X</text>
<text x="709" y="522" fill="#3a7ae8" font-family="Liberation Sans" font-size="13" text-anchor="middle">Z</text>
<line x1="1355.3" y1="490" x2="1355.3" y2="515" stroke="#3ad070" stroke-width="1.3"/>
<line x1="1357" y1="516" x2="1378" y2="516" stroke="#e04848" stroke-width="1.3"/>
<text x="1355.3" y="489" fill="#3ad070" font-family="Liberation Sans" font-size="13" text-anchor="middle">Y</text>
<text x="1355.3" y="522" fill="#3a7ae8" font-family="Liberation Sans" font-size="11" text-anchor="middle">Z</text>
<text x="1386.5" y="522" fill="#e04848" font-family="Liberation Sans" font-size="13" text-anchor="middle">X</text>
<g clip-path="url(#cTL)">
<line x1="390.4" y1="163.8" x2="390.4" y2="272" stroke="#3ad070" stroke-width="1.5"/>
<path d="M390.4,141.8 L394.4,163.8 L386.4,163.8 Z" fill="#3ad070"/>
<line x1="390.4" y1="272" x2="500" y2="268.8" stroke="#e04848" stroke-width="1.5"/>
<path d="M514.8,268.4 L492.8,263.5 L493,273.5 Z" fill="#e04848"/>
<line x1="390.4" y1="272" x2="445" y2="276" stroke="#3a7ae8" stroke-width="1.5"/>
<path d="M453.2,276.2 L448,271.5 L443.8,276 L448,280.5 Z" fill="#3a7ae8"/>
<line x1="468.8" y1="273" x2="497" y2="272.5" stroke="#3ad070" stroke-width="1.5"/>
<rect x="387" y="268.5" width="7" height="7" fill="none" stroke="#9a9a9a" stroke-width="1"/>
<path d="M418,200.5 L428.5,203.4 L430.4,222 Z" fill="rgba(160,160,160,0.5)"/><polyline points="415.4,199.6 428.5,203.4 430.4,231.9" fill="none" stroke="#e04848" stroke-width="1.5"/>
<path d="M445.4,187 L460.4,185.7 L460.4,198.9 Z" fill="rgba(160,160,170,0.6)"/><polyline points="432.3,188.3 460.4,185.7 460.4,218.4" fill="none" stroke="#3a7ae8" stroke-width="1.5"/><line x1="445.4" y1="187" x2="460.4" y2="198.9" stroke="#3a7ae8" stroke-width="1.3"/>
<line x1="283.2" y1="238.3" x2="283.2" y2="269.4" stroke="#3ad070" stroke-width="1.2"/>
<line x1="283.2" y1="269.4" x2="306.5" y2="268" stroke="#e04848" stroke-width="1.2"/>
<line x1="283.2" y1="269.4" x2="302.8" y2="270.5" stroke="#3a7ae8" stroke-width="1.2"/>
<line x1="531" y1="247.7" x2="531" y2="277" stroke="#3ad070" stroke-width="1.2"/>
<line x1="531" y1="277" x2="561" y2="276" stroke="#e04848" stroke-width="1.2"/>
<line x1="531" y1="277" x2="543" y2="277.5" stroke="#3a7ae8" stroke-width="1.2"/>
</g>
<g clip-path="url(#cTR)">
<rect x="724" y="270.7" width="680" height="1.3" fill="#4e4e4e"/>
<rect x="1023.8" y="271" width="1.3" height="170" fill="#4e4e4e"/>
<line x1="1024.4" y1="101" x2="1024.4" y2="263" stroke="#3a7ae8" stroke-width="1.5"/><polyline points="1019.5,108 1024.4,102 1029.3,108" fill="none" stroke="#3a7ae8" stroke-width="1.3"/>
<line x1="1094.6" y1="159.4" x2="1094.6" y2="271" stroke="#3a7ae8" stroke-width="1.5"/>
<path d="M1094.6,140.7 L1099.6,159.4 L1089.6,159.4 Z" fill="#3a7ae8"/>
<line x1="1069" y1="271" x2="1395" y2="271" stroke="#e04848" stroke-width="1.5"/><polyline points="1388,266 1396,271 1388,276" fill="none" stroke="#e04848" stroke-width="1.3"/>
<rect x="741.4" y="263.8" width="327.69999999999993" height="10.5" rx="4" fill="#6c6c6c" stroke="#de8446" stroke-width="2"/>
<rect x="745.4" y="268.3" width="319.69999999999993" height="1.5" fill="#3a3a3a"/>
<rect x="777.8" y="266" width="1" height="5" fill="#3a3a3a"/>
<rect x="814.2" y="266" width="1" height="5" fill="#3a3a3a"/>
<rect x="850.6" y="266" width="1" height="5" fill="#3a3a3a"/>
<rect x="887.0" y="266" width="1" height="5" fill="#3a3a3a"/>
<rect x="923.5" y="266" width="1" height="5" fill="#3a3a3a"/>
<rect x="959.9" y="266" width="1" height="5" fill="#3a3a3a"/>
<rect x="996.3" y="266" width="1" height="5" fill="#3a3a3a"/>
<rect x="1032.7" y="266" width="1" height="5" fill="#3a3a3a"/>
<rect x="1188" y="263.8" width="192.70000000000005" height="10.5" rx="4" fill="#6c6c6c" stroke="#de8446" stroke-width="2"/>
<rect x="1192" y="268.3" width="184.70000000000005" height="1.5" fill="#3a3a3a"/>
<rect x="1226.5" y="266" width="1" height="5" fill="#3a3a3a"/>
<rect x="1265.1" y="266" width="1" height="5" fill="#3a3a3a"/>
<rect x="1303.6" y="266" width="1" height="5" fill="#3a3a3a"/>
<rect x="1342.2" y="266" width="1" height="5" fill="#3a3a3a"/>
<path d="M1224.9,271 L1208,266 L1208,276 Z" fill="#e04848"/><line x1="1195" y1="271" x2="1210" y2="271" stroke="#e04848" stroke-width="1.5"/>
<rect x="1091" y="267.5" width="7" height="7" fill="#3ad070"/><rect x="1093" y="269.5" width="3" height="3" fill="#2a7a4a"/>
<line x1="905" y1="240" x2="905" y2="270" stroke="#3a7ae8" stroke-width="1.5"/><line x1="905" y1="270.5" x2="935" y2="270.5" stroke="#e04848" stroke-width="1.3"/>
<line x1="1285" y1="240" x2="1285" y2="270" stroke="#3a7ae8" stroke-width="1.5"/><line x1="1285" y1="270.5" x2="1315" y2="270.5" stroke="#e04848" stroke-width="1.3"/>
<path d="M1157.3,191.4 L1175,191.4 L1175,208.2 Z" fill="rgba(130,150,130,0.6)"/><polyline points="1142.3,191.4 1175,191.4 1175,223.3" fill="none" stroke="#3ad070" stroke-width="1.5"/><line x1="1157.3" y1="191.4" x2="1175" y2="208.2" stroke="#3ad070" stroke-width="1.3"/>
</g>
<g clip-path="url(#cBL)">
<rect x="380.1" y="470" width="10.6" height="311.2" rx="4" fill="#7a7a7a" stroke="#de8446" stroke-width="1.8"/>
<rect x="384.6" y="474" width="1.4" height="305" fill="#4a4a4a"/>
<line x1="384" y1="517.3" x2="384" y2="628" stroke="#3ad070" stroke-width="1.5"/>
<path d="M384,499.7 L388.5,517.3 L379.5,517.3 Z" fill="#3ad070"/>
<line x1="384" y1="619.7" x2="414.5" y2="619.7" stroke="#3a7ae8" stroke-width="1.3"/><line x1="384" y1="636.6" x2="414.5" y2="636.6" stroke="#3a7ae8" stroke-width="1.3"/>
<line x1="384" y1="628" x2="495.4" y2="628" stroke="#3a7ae8" stroke-width="1.5"/>
<path d="M515,628 L495.4,623.5 L495.4,632.5 Z" fill="#3a7ae8"/>
<rect x="381" y="625" width="6" height="6" fill="#e04848"/>
<path d="M448.5,548.6 L463.4,548.6 L463.4,563 Z" fill="rgba(150,130,130,0.6)"/><polyline points="431,548.6 463.4,548.6 463.4,579.9" fill="none" stroke="#e04848" stroke-width="1.5"/><line x1="448.5" y1="548.6" x2="463.4" y2="563" stroke="#e04848" stroke-width="1.3"/>
<line x1="384" y1="783.6" x2="717" y2="783.6" stroke="#3a7ae8" stroke-width="1.5"/><polyline points="710,778.6 718,783.6 710,788.6" fill="none" stroke="#3a7ae8" stroke-width="1.3"/>
</g>
<g clip-path="url(#cBR)">
<rect x="725" y="798.6" width="315" height="1.3" fill="#4e4e4e"/>
<line x1="1039.8" y1="476" x2="1039.8" y2="812" stroke="#3ad070" stroke-width="1.5"/><polyline points="1034.8,482 1039.8,476 1044.8,482" fill="none" stroke="#3ad070" stroke-width="1.3"/>
<line x1="1039.8" y1="799.2" x2="1395" y2="799.2" stroke="#e04848" stroke-width="1.5"/><polyline points="1388,794.2 1396,799.2 1388,804.2" fill="none" stroke="#e04848" stroke-width="1.3"/>
<g clip-path="url(#tbig)"><path d="M868.7,514.3 A39.9,39.9 0 0 1 937.1,487.0 A39.1,39.1 0 0 1 1004.2,514.3 A40.8,40.8 0 0 1 1049.6,572.9 A39.2,39.2 0 0 1 1057.4,644.5 A40.2,40.2 0 0 1 1007.0,705.9 A38.0,38.0 0 0 1 946.7,722.6 L937.9,760.9 L938.9,797.1 L907.7,794.6 L905.9,782.2 L925.4,734.3 L924.7,723.6 A37.4,37.4 0 0 1 866.9,705.9 A39.8,39.8 0 0 1 817.2,644.5 A38.7,38.7 0 0 1 826.1,572.2 A38.6,38.6 0 0 1 868.7,514.3 Z" fill="none" stroke="#a8a8a8" stroke-width="9.6"/><path d="M868.7,514.3 A39.9,39.9 0 0 1 937.1,487.0 A39.1,39.1 0 0 1 1004.2,514.3 A40.8,40.8 0 0 1 1049.6,572.9 A39.2,39.2 0 0 1 1057.4,644.5 A40.2,40.2 0 0 1 1007.0,705.9 A38.0,38.0 0 0 1 946.7,722.6 L937.9,760.9 L938.9,797.1 L907.7,794.6 L905.9,782.2 L925.4,734.3 L924.7,723.6 A37.4,37.4 0 0 1 866.9,705.9 A39.8,39.8 0 0 1 817.2,644.5 A38.7,38.7 0 0 1 826.1,572.2 A38.6,38.6 0 0 1 868.7,514.3 Z" fill="none" stroke="#5e5e5e" stroke-width="7.2"/><path d="M868.7,514.3 A39.9,39.9 0 0 1 937.1,487.0 A39.1,39.1 0 0 1 1004.2,514.3 A40.8,40.8 0 0 1 1049.6,572.9 A39.2,39.2 0 0 1 1057.4,644.5 A40.2,40.2 0 0 1 1007.0,705.9 A38.0,38.0 0 0 1 946.7,722.6 L937.9,760.9 L938.9,797.1 L907.7,794.6 L905.9,782.2 L925.4,734.3 L924.7,723.6 A37.4,37.4 0 0 1 866.9,705.9 A39.8,39.8 0 0 1 817.2,644.5 A38.7,38.7 0 0 1 826.1,572.2 A38.6,38.6 0 0 1 868.7,514.3 Z" fill="none" stroke="#9a9a9a" stroke-width="5.2"/><path d="M868.7,514.3 A39.9,39.9 0 0 1 937.1,487.0 A39.1,39.1 0 0 1 1004.2,514.3 A40.8,40.8 0 0 1 1049.6,572.9 A39.2,39.2 0 0 1 1057.4,644.5 A40.2,40.2 0 0 1 1007.0,705.9 A38.0,38.0 0 0 1 946.7,722.6 L937.9,760.9 L938.9,797.1 L907.7,794.6 L905.9,782.2 L925.4,734.3 L924.7,723.6 A37.4,37.4 0 0 1 866.9,705.9 A39.8,39.8 0 0 1 817.2,644.5 A38.7,38.7 0 0 1 826.1,572.2 A38.6,38.6 0 0 1 868.7,514.3 Z" fill="none" stroke="#696969" stroke-width="3.6"/></g>
<path d="M868.7,514.3 A39.9,39.9 0 0 1 937.1,487.0 A39.1,39.1 0 0 1 1004.2,514.3 A40.8,40.8 0 0 1 1049.6,572.9 A39.2,39.2 0 0 1 1057.4,644.5 A40.2,40.2 0 0 1 1007.0,705.9 A38.0,38.0 0 0 1 946.7,722.6 L937.9,760.9 L938.9,797.1 L907.7,794.6 L905.9,782.2 L925.4,734.3 L924.7,723.6 A37.4,37.4 0 0 1 866.9,705.9 A39.8,39.8 0 0 1 817.2,644.5 A38.7,38.7 0 0 1 826.1,572.2 A38.6,38.6 0 0 1 868.7,514.3 Z" fill="none" stroke="#dc8850" stroke-width="2.2"/>
<g clip-path="url(#tsmall)"><path d="M1224.7,580.8 A37.8,37.8 0 1 1 1300.3,578.2 A29.9,29.9 0 0 1 1322.5,631.6 A34.0,34.0 0 1 1 1284.7,685.9 L1266.4,707.2 L1274.2,765.9 L1253.4,765.9 L1258.6,709.8 L1235.2,689.0 A33.2,33.2 0 1 1 1196.1,635.6 A33.1,33.1 0 0 1 1224.7,580.8 Z" fill="none" stroke="#a8a8a8" stroke-width="9.6"/><path d="M1224.7,580.8 A37.8,37.8 0 1 1 1300.3,578.2 A29.9,29.9 0 0 1 1322.5,631.6 A34.0,34.0 0 1 1 1284.7,685.9 L1266.4,707.2 L1274.2,765.9 L1253.4,765.9 L1258.6,709.8 L1235.2,689.0 A33.2,33.2 0 1 1 1196.1,635.6 A33.1,33.1 0 0 1 1224.7,580.8 Z" fill="none" stroke="#5e5e5e" stroke-width="7.2"/><path d="M1224.7,580.8 A37.8,37.8 0 1 1 1300.3,578.2 A29.9,29.9 0 0 1 1322.5,631.6 A34.0,34.0 0 1 1 1284.7,685.9 L1266.4,707.2 L1274.2,765.9 L1253.4,765.9 L1258.6,709.8 L1235.2,689.0 A33.2,33.2 0 1 1 1196.1,635.6 A33.1,33.1 0 0 1 1224.7,580.8 Z" fill="none" stroke="#9a9a9a" stroke-width="5.2"/><path d="M1224.7,580.8 A37.8,37.8 0 1 1 1300.3,578.2 A29.9,29.9 0 0 1 1322.5,631.6 A34.0,34.0 0 1 1 1284.7,685.9 L1266.4,707.2 L1274.2,765.9 L1253.4,765.9 L1258.6,709.8 L1235.2,689.0 A33.2,33.2 0 1 1 1196.1,635.6 A33.1,33.1 0 0 1 1224.7,580.8 Z" fill="none" stroke="#696969" stroke-width="3.6"/></g>
<path d="M1224.7,580.8 A37.8,37.8 0 1 1 1300.3,578.2 A29.9,29.9 0 0 1 1322.5,631.6 A34.0,34.0 0 1 1 1284.7,685.9 L1266.4,707.2 L1274.2,765.9 L1253.4,765.9 L1258.6,709.8 L1235.2,689.0 A33.2,33.2 0 1 1 1196.1,635.6 A33.1,33.1 0 0 1 1224.7,580.8 Z" fill="none" stroke="#dc8850" stroke-width="2.2"/>
<path d="M1239.1,688.5 Q1251,694.5 1259.9,694.2 L1258.8,704.5 Z M1284.7,686.4 Q1274,694 1265.1,694.2 L1266.2,704.5 Z" fill="none" stroke="#dc8850" stroke-width="1.6"/>
<path d="M1243,690 Q1252,696.5 1257.5,696.5 L1257,700.5 Z M1281,689 Q1273,695.5 1267.5,696.5 L1268,700.5 Z" fill="none" stroke="#c4c4c4" stroke-width="0.9"/>
<line x1="1099.2" y1="534.1" x2="1099.2" y2="645.2" stroke="#3ad070" stroke-width="1.5"/>
<path d="M1099.2,513.4 L1104.2,534.1 L1094.2,534.1 Z" fill="#3ad070"/>
<line x1="1099.2" y1="645.2" x2="1210.6" y2="645.2" stroke="#e04848" stroke-width="1.5"/>
<path d="M1230.2,645.2 L1210.6,640.2 L1210.6,650.2 Z" fill="#e04848"/>
<circle cx="1099.2" cy="645.2" r="4.2" fill="#3a7ae8"/>
<path d="M1163.7,566.2 L1178.6,566.2 L1178.6,581 Z" fill="rgba(130,140,160,0.6)"/><polyline points="1148,566.2 1178.6,566.2 1178.6,596.7" fill="none" stroke="#3a7ae8" stroke-width="1.5"/><line x1="1163.7" y1="566.2" x2="1178.6" y2="581" stroke="#3a7ae8" stroke-width="1.3"/>
<line x1="937" y1="606" x2="937" y2="636.6" stroke="#3ad070" stroke-width="1.5"/><line x1="937" y1="636.6" x2="967" y2="636.6" stroke="#e04848" stroke-width="1.5"/>
<line x1="1261.8" y1="623.3" x2="1261.8" y2="653.4" stroke="#3ad070" stroke-width="1.5"/><line x1="1261.8" y1="653.4" x2="1292.7" y2="653.4" stroke="#e04848" stroke-width="1.5"/>
</g>
<path d="M1443,164 L1443,172 L1435,172 Z" fill="#a0a0a0"/>
<path d="M1443,208 L1443,216 L1435,216 Z" fill="#a0a0a0"/>
<path d="M1443,254 L1443,262 L1435,262 Z" fill="#a0a0a0"/>
<path d="M1443,310 L1443,318 L1435,318 Z" fill="#a0a0a0"/>
<path d="M1443,355 L1443,363 L1435,363 Z" fill="#a0a0a0"/>
<path d="M1443,405.6 L1443,413.6 L1435,413.6 Z" fill="#a0a0a0"/>
<path d="M1443,451.4 L1443,459.4 L1435,459.4 Z" fill="#a0a0a0"/>
<path d="M1443,501.4 L1443,509.4 L1435,509.4 Z" fill="#a0a0a0"/>
<path d="M1443,558 L1443,566 L1435,566 Z" fill="#a0a0a0"/>
<path d="M1443,603.5 L1443,611.5 L1435,611.5 Z" fill="#a0a0a0"/>
<path d="M1443,647 L1443,655 L1435,655 Z" fill="#a0a0a0"/>
<path d="M1443,693 L1443,701 L1435,701 Z" fill="#a0a0a0"/>
<path d="M1443,763 L1443,771 L1435,771 Z" fill="#a0a0a0"/>
<g transform="translate(1405,75)" fill="none" stroke="#c8d4ff" stroke-width="3"><path d="M6,8 V32 H31"/><path d="M1,13 L6,7 L11,13"/><path d="M26,27 L32,32 L26,37"/></g><circle cx="1429" cy="86" r="7.5" fill="#c8d4ff"/>
<rect x="1410.5" y="138" width="24" height="24" fill="none" stroke="#7fd4f4" stroke-width="3"/>
<g transform="translate(1409.5,180)"><path d="M13,1 L26,7.5 L13,14 L0,7.5 Z" fill="#a9e4fb"/><path d="M0,9 L12,15 L12,30 L0,23.5 Z" fill="#7fd4f4"/><path d="M14,15 L26,9 L26,23.5 L14,30 Z" fill="#6cc8ea"/></g>
<g fill="#7fd4f4"><rect x="1409" y="227" width="27" height="3.2"/><rect x="1409" y="227" width="3" height="6"/><rect x="1433" y="227" width="3" height="6"/><rect x="1421" y="227" width="3.2" height="27"/><rect x="1414" y="251" width="17" height="3"/></g>
<circle cx="1422.5" cy="297.7" r="7.7" fill="#5ed37c"/>
<g fill="none" stroke="#e6e6e6" stroke-width="1.6" stroke-dasharray="3 2"><path d="M1416,289 Q1422.5,285 1429,289"/><path d="M1416,306.5 Q1422.5,310.5 1429,306.5"/></g>
<g fill="#e6e6e6"><rect x="1410.2" y="294" width="1.8" height="7.5"/><rect x="1433" y="294" width="1.8" height="7.5"/></g>
<g fill="#3b3b3b" stroke="#ececec" stroke-width="1.7"><rect x="1419.9" y="282.9" width="5.2" height="5.2"/><rect x="1408.4" y="287.8" width="5.2" height="5.2"/><rect x="1431.4" y="287.8" width="5.2" height="5.2"/><rect x="1408.4" y="302.9" width="5.2" height="5.2"/><rect x="1431.4" y="302.9" width="5.2" height="5.2"/><rect x="1419.9" y="307.9" width="5.2" height="5.2"/></g>
<g transform="translate(1409.5,328)"><path d="M13,0 L26,6.5 L13,13 L0,6.5 Z" fill="#5ed37c"/><path d="M0,9 L11,14.5 L11,28.5 L0,23 Z" fill="#5ed37c"/><path d="M15,14.5 L26,9 L26,23 L15,28.5 Z" fill="#5ed37c"/></g>
<g transform="translate(1409,377)" fill="none" stroke="#9a8cf0" stroke-width="2.4"><path d="M3,12 C3,4 10,1 15,3 C22,6 27,14 26,24 L20,30 C19,22 15,15 9,13 Z"/><path d="M9,13 C13,16 16,21 16,28"/></g>
<g transform="translate(1407,422)" fill="none" stroke="#9a8cf0" stroke-width="2.6"><path d="M4,4 V31 H30"/><path d="M0,9 L4,4 L8,9"/><path d="M25,27 L30,31 L25,35"/><path d="M15,8 L22,4 L29,8 V16 L22,20 L15,16 Z" stroke-width="1.6"/><path d="M15,8 L22,12 L29,8 M22,12 V20" stroke-width="1.6"/></g>
<g transform="translate(1409,474)" fill="none" stroke="#e89ae8" stroke-width="2.6"><path d="M2,12 L14,6 L14,24 L2,30 Z"/><path d="M14,6 L26,0 L26,18 L14,24"/><path d="M0,14 L26,20" stroke-width="2"/></g>
<g fill="none" stroke="#c8d4ff" stroke-width="2.2"><circle cx="1421" cy="544" r="14"/><ellipse cx="1421" cy="544" rx="6" ry="14"/><line x1="1407" y1="544" x2="1435" y2="544"/><line x1="1409" y1="537" x2="1433" y2="537"/><line x1="1409" y1="551" x2="1433" y2="551"/></g>
<rect x="1424" y="550" width="14" height="12" rx="2" fill="#0a0a0a"/><text x="1431" y="560" font-family="Liberation Sans" font-size="9.5" font-weight="bold" fill="#ffffff" text-anchor="middle">ST</text>
<g fill="#c8d4ff"><rect x="1407" y="580" width="30" height="6"/></g><g fill="#3b3b3b"><path d="M1411,580 l3,0 l-2,6 l-3,0 z M1418,580 l3,0 l-2,6 l-3,0 z M1425,580 l3,0 l-2,6 l-3,0 z M1432,580 l3,0 l-2,6 l-3,0 z"/></g><rect x="1408.5" y="588" width="27" height="15" fill="none" stroke="#c8d4ff" stroke-width="2.6"/>
<g fill="none" stroke="#c8d4ff" stroke-width="2.6"><path d="M1409,637 V628 H1422 V637"/><rect x="1408.5" y="637" width="20" height="12"/></g><path d="M1429,640 L1437,635 L1437,650 L1429,645 Z" fill="#c8d4ff"/>
<rect x="1424" y="637" width="14" height="12" rx="2" fill="#0a0a0a"/><text x="1431" y="647" font-family="Liberation Sans" font-size="9.5" font-weight="bold" fill="#ffffff" text-anchor="middle">ST</text>
<g fill="none" stroke="#c8d4ff" stroke-width="2.2"><path d="M1416,689 C1410,684 1412,673 1421,673 C1430,673 1432,684 1426,689 Z"/><line x1="1416" y1="693" x2="1426" y2="693"/><line x1="1421" y1="665" x2="1421" y2="669"/><line x1="1408" y1="680" x2="1411" y2="680"/><line x1="1431" y1="680" x2="1434" y2="680"/><line x1="1411" y1="670" x2="1413" y2="672"/><line x1="1431" y1="670" x2="1429" y2="672"/></g>
<rect x="1424" y="683" width="14" height="12" rx="2" fill="#0a0a0a"/><text x="1431" y="693" font-family="Liberation Sans" font-size="9.5" font-weight="bold" fill="#ffffff" text-anchor="middle">ST</text>
<g fill="none" stroke="#d0d0d0" stroke-width="2"><path d="M1422,735 L1435,742.5 L1435,757.5 L1422,765 L1409,757.5 L1409,742.5 Z"/></g><path d="M1415,756 L1418,749 L1429,738 L1433,742 L1422,753 Z" fill="#e8e8e8"/>
<rect x="1455" y="71.3" width="18" height="2.4" fill="#a9a9a9"/>
<rect x="1455" y="76.3" width="18" height="2.4" fill="#a9a9a9"/>
<rect x="1455" y="81.3" width="18" height="2.4" fill="#a9a9a9"/>
<polyline points="1749,72.5 1754,77.5 1749,82.5" fill="none" stroke="#b0b0b0" stroke-width="1.6"/>
<g fill="none" stroke="#a9a9a9" stroke-width="1.8"><circle cx="1821" cy="75.5" r="5.5"/><line x1="1825" y1="79.5" x2="1830" y2="85"/></g>
<path d="M1841.5,86 V76.5 L1849,69.5 L1856.5,76.5 V86 H1852 V80 H1846 V86 Z" fill="none" stroke="#a9a9a9" stroke-width="1.8"/>
<g fill="#a9a9a9"><rect x="1865" y="71" width="18" height="2"/><rect x="1868" y="76" width="12" height="2"/><rect x="1871" y="81" width="6" height="2"/></g>
<g fill="none" stroke="#a9a9a9" stroke-width="1.8"><path d="M1897,70 H1891 V86 H1907 V80"/><path d="M1900,70 H1907 V77 M1907,70 L1896,81"/></g>
<g stroke="#777777" stroke-width="1" fill="none"><line x1="1458" y1="94" x2="1458" y2="101"/><line x1="1473" y1="120" x2="1473" y2="176"/><line x1="1464" y1="107" x2="1469" y2="107"/><line x1="1479" y1="131.8" x2="1485" y2="131.8"/><line x1="1479" y1="182" x2="1485" y2="182"/><polyline points="1488,138 1488,157 1498,157"/><polyline points="1488,188 1488,206.5 1498,206.5"/></g>
<rect x="1452.5" y="101.9" width="11" height="11" fill="#232323" stroke="#8a8a8a" stroke-width="1"/><line x1="1455" y1="107.4" x2="1461" y2="107.4" stroke="#9a9a9a" stroke-width="1.5"/>
<rect x="1467.5" y="126.30000000000001" width="11" height="11" fill="#232323" stroke="#8a8a8a" stroke-width="1"/><line x1="1470" y1="131.8" x2="1476" y2="131.8" stroke="#9a9a9a" stroke-width="1.5"/>
<rect x="1467.5" y="176.5" width="11" height="11" fill="#232323" stroke="#8a8a8a" stroke-width="1"/><line x1="1470" y1="182" x2="1476" y2="182" stroke="#9a9a9a" stroke-width="1.5"/>
<g transform="translate(1470,98.4) scale(1.0)" fill="none" stroke="#c8d4ff" stroke-width="2"><path d="M3,4 V16 H15"/><path d="M0.5,6.5 L3,3.5 L5.5,6.5"/><path d="M12.5,13.5 L15.5,16 L12.5,18.5"/></g><circle cx="1482" cy="104.4" r="4" fill="#c8d4ff"/>
<g transform="translate(1485.5,123.80000000000001)"><path d="M8,0 L15,3.5 L8,7 L1,3.5 Z" fill="#5ed37c"/><path d="M9,8 L15,5 L15,13 L9,16 Z" fill="#5ed37c"/><path d="M1,5 L7,8 L7,16 L1,13 Z" fill="#111" stroke="#eeeeee" stroke-width="1.3"/></g>
<g transform="translate(1485.5,174)"><path d="M8,0 L15,3.5 L8,7 L1,3.5 Z" fill="#5ed37c"/><path d="M9,8 L15,5 L15,13 L9,16 Z" fill="#5ed37c"/><path d="M1,5 L7,8 L7,16 L1,13 Z" fill="#111" stroke="#eeeeee" stroke-width="1.3"/></g>
<g transform="translate(1501,149)"><path d="M5,2 C-2,4 2,9 8,10 C13,11 13,15 6,15" fill="none" stroke="#7fd4f4" stroke-width="1.6"/><circle cx="5" cy="1.5" r="1.8" fill="#fff"/><circle cx="6" cy="15" r="1.8" fill="#fff"/></g>
<g transform="translate(1501,198.5)"><path d="M5,2 C-2,4 2,9 8,10 C13,11 13,15 6,15" fill="none" stroke="#7fd4f4" stroke-width="1.6"/><circle cx="5" cy="1.5" r="1.8" fill="#fff"/><circle cx="6" cy="15" r="1.8" fill="#fff"/></g>
<rect x="1577" y="100.9" width="13" height="13" rx="3" fill="#555"/><line x1="1580.5" y1="110.9" x2="1586.5" y2="103.9" stroke="#222" stroke-width="1.6"/>
<circle cx="1600.8" cy="102.80000000000001" r="3.8" fill="#585858"/><circle cx="1600.8" cy="112.0" r="3.8" fill="#585858"/>
<rect x="1577" y="125.30000000000001" width="13" height="13" rx="3" fill="#555"/><line x1="1580.5" y1="135.3" x2="1586.5" y2="128.3" stroke="#222" stroke-width="1.6"/>
<circle cx="1600.8" cy="127.20000000000002" r="3.8" fill="#585858"/><circle cx="1600.8" cy="136.4" r="3.8" fill="#585858"/>
<polyline points="1610.5,131.8 1614.5,135.8 1624,126.80000000000001" fill="none" stroke="#58d068" stroke-width="2.4"/>
<rect x="1577" y="150.5" width="13" height="13" rx="3" fill="#555"/><line x1="1580.5" y1="160.5" x2="1586.5" y2="153.5" stroke="#222" stroke-width="1.6"/>
<circle cx="1600.8" cy="152.4" r="3.8" fill="#585858"/><circle cx="1600.8" cy="161.6" r="3.8" fill="#585858"/>
<polyline points="1610.5,157 1614.5,161 1624,152" fill="none" stroke="#58d068" stroke-width="2.4"/>
<rect x="1577" y="175.5" width="13" height="13" rx="3" fill="#555"/><line x1="1580.5" y1="185.5" x2="1586.5" y2="178.5" stroke="#222" stroke-width="1.6"/>
<circle cx="1600.8" cy="177.4" r="3.8" fill="#585858"/><circle cx="1600.8" cy="186.6" r="3.8" fill="#585858"/>
<polyline points="1610.5,182 1614.5,186 1624,177" fill="none" stroke="#58d068" stroke-width="2.4"/>
<rect x="1577" y="200.0" width="13" height="13" rx="3" fill="#555"/><line x1="1580.5" y1="210.0" x2="1586.5" y2="203.0" stroke="#222" stroke-width="1.6"/>
<circle cx="1600.8" cy="201.9" r="3.8" fill="#585858"/><circle cx="1600.8" cy="211.1" r="3.8" fill="#585858"/>
<polyline points="1610.5,206.5 1614.5,210.5 1624,201.5" fill="none" stroke="#58d068" stroke-width="2.4"/>
<path d="M1637,124.80000000000001 H1652.5 V125.80000000000001 L1640,132.8 V138.8 H1637 Z" fill="#9a92f2"/><path d="M1639.5,126.80000000000001 H1650 L1639.5,132.8 Z" fill="#7f78e0"/>
<path d="M1637,175 H1652.5 V176 L1640,183 V189 H1637 Z" fill="#9a92f2"/><path d="M1639.5,177 H1650 L1639.5,183 Z" fill="#7f78e0"/>
<rect x="1455" y="281.3" width="18" height="2.4" fill="#a9a9a9"/>
<rect x="1455" y="286.3" width="18" height="2.4" fill="#a9a9a9"/>
<rect x="1455" y="291.3" width="18" height="2.4" fill="#a9a9a9"/>
<g fill="none" stroke="#a9a9a9" stroke-width="2"><path d="M1731,287.5 H1716 M1722,281.5 L1716,287.5 L1722,293.5"/></g>
<g fill="none" stroke="#5a5a5a" stroke-width="2"><path d="M1739,287.5 H1754 M1748,281.5 L1754,287.5 L1748,293.5"/></g>
<g fill="none" stroke="#a9a9a9" stroke-width="2"><path d="M1774,296 V280 M1768,286 L1774,280 L1780,286"/></g>
<g fill="none" stroke="#a9a9a9" stroke-width="1.8"><circle cx="1797" cy="285.5" r="5.5"/><line x1="1801" y1="289.5" x2="1806" y2="295"/></g>
<g fill="#a9a9a9"><rect x="1815" y="281" width="18" height="2"/><rect x="1818" y="286" width="12" height="2"/><rect x="1821" y="291" width="6" height="2"/></g>
<g fill="none" stroke="#a9a9a9" stroke-width="1.8"><rect x="1842" y="285" width="13" height="10" rx="1.5"/><path d="M1845,285 V281.5 A3.5,3.5 0 0 1 1852,281.5 V285"/></g><rect x="1847.5" y="288" width="2" height="3" fill="#a9a9a9"/>
<g fill="none" stroke="#a9a9a9" stroke-width="1.8"><circle cx="1873.5" cy="287.5" r="8"/></g><circle cx="1873.5" cy="287.5" r="3" fill="#a9a9a9"/>
<g fill="none" stroke="#a9a9a9" stroke-width="1.8"><path d="M1897,280 H1891 V296 H1907 V290"/><path d="M1900,280 H1907 V287 M1907,280 L1896,291"/></g>
<g transform="translate(1460,312.6)"><path d="M8,0 L15,3.5 L8,7 L1,3.5 Z" fill="#5ed37c"/><path d="M9,8 L15,5 L15,13 L9,16 Z" fill="#5ed37c"/><path d="M1,5 L7,8 L7,16 L1,13 Z" fill="#111" stroke="#eeeeee" stroke-width="1.3"/></g>
<path d="M1885.5,318 L1895.5,318 L1890.5,323 Z" fill="#c0c0c0"/>
<path d="M1817,357 V350 A4,4.5 0 0 1 1825,350 V357 Z" fill="none" stroke="#d0d0d0" stroke-width="1.3"/>
<circle cx="1466.4" cy="410.5" r="9.5" fill="#282828"/><path d="M1466.4,404.7 L1472.2,410.5 L1466.4,416.3 L1460.6000000000001,410.5 Z" fill="none" stroke="#bdbdbd" stroke-width="1.5"/>
<path d="M1866.5,408 L1876.5,408 L1871.5,413 Z" fill="#c0c0c0"/>
<circle cx="1466.4" cy="436" r="9.5" fill="#282828"/><path d="M1466.4,430.2 L1472.2,436 L1466.4,441.8 L1460.6000000000001,436 Z" fill="none" stroke="#bdbdbd" stroke-width="1.5"/>
<circle cx="1466.4" cy="464.4" r="9.5" fill="#282828"/><path d="M1466.4,458.59999999999997 L1472.2,464.4 L1466.4,470.2 L1460.6000000000001,464.4 Z" fill="none" stroke="#bdbdbd" stroke-width="1.5"/>
<circle cx="1466.4" cy="491.6" r="9.5" fill="#282828"/><path d="M1466.4,485.8 L1472.2,491.6 L1466.4,497.40000000000003 L1460.6000000000001,491.6 Z" fill="none" stroke="#bdbdbd" stroke-width="1.5"/>
<circle cx="1466.4" cy="518" r="9.5" fill="#282828"/><path d="M1466.4,512.2 L1472.2,518 L1466.4,523.8 L1460.6000000000001,518 Z" fill="none" stroke="#bdbdbd" stroke-width="1.5"/>
<circle cx="1466.4" cy="542.6" r="9.5" fill="#282828"/><path d="M1466.4,536.8000000000001 L1472.2,542.6 L1466.4,548.4 L1460.6000000000001,542.6 Z" fill="none" stroke="#bdbdbd" stroke-width="1.5"/>
<circle cx="1466.4" cy="620" r="9.5" fill="#282828"/><path d="M1466.4,614.2 L1472.2,620 L1466.4,625.8 L1460.6000000000001,620 Z" fill="none" stroke="#bdbdbd" stroke-width="1.5"/>
<polyline points="1575.0,620 1578.3,623.5 1584.0,616.5" fill="none" stroke="#fff" stroke-width="2"/>
<circle cx="1466.4" cy="645" r="9.5" fill="#282828"/><path d="M1466.4,639.2 L1472.2,645 L1466.4,650.8 L1460.6000000000001,645 Z" fill="none" stroke="#bdbdbd" stroke-width="1.5"/>
<polyline points="1575.0,645 1578.3,648.5 1584.0,641.5" fill="none" stroke="#fff" stroke-width="2"/>
<circle cx="1466.4" cy="670.8" r="9.5" fill="#282828"/><path d="M1466.4,665.0 L1472.2,670.8 L1466.4,676.5999999999999 L1460.6000000000001,670.8 Z" fill="none" stroke="#bdbdbd" stroke-width="1.5"/>
<path d="M1866.5,668.5 L1876.5,668.5 L1871.5,673.5 Z" fill="#c0c0c0"/>
<circle cx="1466.4" cy="724.2" r="9.5" fill="#282828"/><path d="M1466.4,718.4000000000001 L1472.2,724.2 L1466.4,730.0 L1460.6000000000001,724.2 Z" fill="none" stroke="#bdbdbd" stroke-width="1.5"/>
<polyline points="1468.5,752.5 1472.7,756.7 1476.9,752.5" fill="none" stroke="#cfcfcf" stroke-width="1.6"/>
<circle cx="1476.3" cy="786" r="9.5" fill="#282828"/><path d="M1476.3,780.2 L1482.1,786 L1476.3,791.8 L1470.5,786 Z" fill="none" stroke="#bdbdbd" stroke-width="1.5"/>
<circle cx="1476.3" cy="813" r="9.5" fill="#282828"/><path d="M1476.3,807.2 L1482.1,813 L1476.3,818.8 L1470.5,813 Z" fill="none" stroke="#bdbdbd" stroke-width="1.5"/>
<circle cx="1476.3" cy="840.2" r="9.5" fill="#282828"/><path d="M1476.3,834.4000000000001 L1482.1,840.2 L1476.3,846.0 L1470.5,840.2 Z" fill="none" stroke="#bdbdbd" stroke-width="1.5"/>
<circle cx="1476.3" cy="868" r="9.5" fill="#282828"/><path d="M1476.3,862.2 L1482.1,868 L1476.3,873.8 L1470.5,868 Z" fill="none" stroke="#bdbdbd" stroke-width="1.5"/>
<circle cx="1476.3" cy="894.5" r="9.5" fill="#282828"/><path d="M1476.3,888.7 L1482.1,894.5 L1476.3,900.3 L1470.5,894.5 Z" fill="none" stroke="#bdbdbd" stroke-width="1.5"/>
<g fill="#555555"><rect x="52" y="817.5" width="2" height="1.5"/><rect x="52" y="821.8" width="2" height="1.5"/><rect x="56" y="817.5" width="2" height="1.5"/><rect x="56" y="821.8" width="2" height="1.5"/><rect x="60" y="817.5" width="2" height="1.5"/><rect x="60" y="821.8" width="2" height="1.5"/><rect x="64" y="817.5" width="2" height="1.5"/><rect x="64" y="821.8" width="2" height="1.5"/><rect x="68" y="817.5" width="2" height="1.5"/><rect x="68" y="821.8" width="2" height="1.5"/><rect x="72" y="817.5" width="2" height="1.5"/><rect x="72" y="821.8" width="2" height="1.5"/><rect x="76" y="817.5" width="2" height="1.5"/><rect x="76" y="821.8" width="2" height="1.5"/><rect x="80" y="817.5" width="2" height="1.5"/><rect x="80" y="821.8" width="2" height="1.5"/><rect x="84" y="817.5" width="2" height="1.5"/><rect x="84" y="821.8" width="2" height="1.5"/><rect x="88" y="817.5" width="2" height="1.5"/><rect x="88" y="821.8" width="2" height="1.5"/><rect x="92" y="817.5" width="2" height="1.5"/><rect x="92" y="821.8" width="2" height="1.5"/><rect x="96" y="817.5" width="2" height="1.5"/><rect x="96" y="821.8" width="2" height="1.5"/><rect x="100" y="817.5" width="2" height="1.5"/><rect x="100" y="821.8" width="2" height="1.5"/><rect x="104" y="817.5" width="2" height="1.5"/><rect x="104" y="821.8" width="2" height="1.5"/><rect x="108" y="817.5" width="2" height="1.5"/><rect x="108" y="821.8" width="2" height="1.5"/><rect x="112" y="817.5" width="2" height="1.5"/><rect x="112" y="821.8" width="2" height="1.5"/><rect x="116" y="817.5" width="2" height="1.5"/><rect x="116" y="821.8" width="2" height="1.5"/><rect x="120" y="817.5" width="2" height="1.5"/><rect x="120" y="821.8" width="2" height="1.5"/><rect x="124" y="817.5" width="2" height="1.5"/><rect x="124" y="821.8" width="2" height="1.5"/><rect x="128" y="817.5" width="2" height="1.5"/><rect x="128" y="821.8" width="2" height="1.5"/><rect x="132" y="817.5" width="2" height="1.5"/><rect x="132" y="821.8" width="2" height="1.5"/><rect x="136" y="817.5" width="2" height="1.5"/><rect x="136" y="821.8" width="2" height="1.5"/><rect x="140" y="817.5" width="2" height="1.5"/><rect x="140" y="821.8" width="2" height="1.5"/><rect x="144" y="817.5" width="2" height="1.5"/><rect x="144" y="821.8" width="2" height="1.5"/><rect x="148" y="817.5" width="2" height="1.5"/><rect x="148" y="821.8" width="2" height="1.5"/><rect x="152" y="817.5" width="2" height="1.5"/><rect x="152" y="821.8" width="2" height="1.5"/><rect x="156" y="817.5" width="2" height="1.5"/><rect x="156" y="821.8" width="2" height="1.5"/><rect x="160" y="817.5" width="2" height="1.5"/><rect x="160" y="821.8" width="2" height="1.5"/><rect x="164" y="817.5" width="2" height="1.5"/><rect x="164" y="821.8" width="2" height="1.5"/><rect x="168" y="817.5" width="2" height="1.5"/><rect x="168" y="821.8" width="2" height="1.5"/><rect x="172" y="817.5" width="2" height="1.5"/><rect x="172" y="821.8" width="2" height="1.5"/><rect x="176" y="817.5" width="2" height="1.5"/><rect x="176" y="821.8" width="2" height="1.5"/><rect x="180" y="817.5" width="2" height="1.5"/><rect x="180" y="821.8" width="2" height="1.5"/><rect x="184" y="817.5" width="2" height="1.5"/><rect x="184" y="821.8" width="2" height="1.5"/><rect x="188" y="817.5" width="2" height="1.5"/><rect x="188" y="821.8" width="2" height="1.5"/><rect x="192" y="817.5" width="2" height="1.5"/><rect x="192" y="821.8" width="2" height="1.5"/><rect x="196" y="817.5" width="2" height="1.5"/><rect x="196" y="821.8" width="2" height="1.5"/><rect x="200" y="817.5" width="2" height="1.5"/><rect x="200" y="821.8" width="2" height="1.5"/><rect x="204" y="817.5" width="2" height="1.5"/><rect x="204" y="821.8" width="2" height="1.5"/><rect x="208" y="817.5" width="2" height="1.5"/><rect x="208" y="821.8" width="2" height="1.5"/><rect x="212" y="817.5" width="2" height="1.5"/><rect x="212" y="821.8" width="2" height="1.5"/><rect x="216" y="817.5" width="2" height="1.5"/><rect x="216" y="821.8" width="2" height="1.5"/><rect x="220" y="817.5" width="2" height="1.5"/><rect x="220" y="821.8" width="2" height="1.5"/><rect x="224" y="817.5" width="2" height="1.5"/><rect x="224" y="821.8" width="2" height="1.5"/><rect x="228" y="817.5" width="2" height="1.5"/><rect x="228" y="821.8" width="2" height="1.5"/><rect x="232" y="817.5" width="2" height="1.5"/><rect x="232" y="821.8" width="2" height="1.5"/><rect x="236" y="817.5" width="2" height="1.5"/><rect x="236" y="821.8" width="2" height="1.5"/><rect x="240" y="817.5" width="2" height="1.5"/><rect x="240" y="821.8" width="2" height="1.5"/><rect x="244" y="817.5" width="2" height="1.5"/><rect x="244" y="821.8" width="2" height="1.5"/><rect x="248" y="817.5" width="2" height="1.5"/><rect x="248" y="821.8" width="2" height="1.5"/><rect x="252" y="817.5" width="2" height="1.5"/><rect x="252" y="821.8" width="2" height="1.5"/><rect x="256" y="817.5" width="2" height="1.5"/><rect x="256" y="821.8" width="2" height="1.5"/><rect x="260" y="817.5" width="2" height="1.5"/><rect x="260" y="821.8" width="2" height="1.5"/><rect x="264" y="817.5" width="2" height="1.5"/><rect x="264" y="821.8" width="2" height="1.5"/><rect x="268" y="817.5" width="2" height="1.5"/><rect x="268" y="821.8" width="2" height="1.5"/><rect x="272" y="817.5" width="2" height="1.5"/><rect x="272" y="821.8" width="2" height="1.5"/><rect x="276" y="817.5" width="2" height="1.5"/><rect x="276" y="821.8" width="2" height="1.5"/><rect x="280" y="817.5" width="2" height="1.5"/><rect x="280" y="821.8" width="2" height="1.5"/><rect x="284" y="817.5" width="2" height="1.5"/><rect x="284" y="821.8" width="2" height="1.5"/><rect x="288" y="817.5" width="2" height="1.5"/><rect x="288" y="821.8" width="2" height="1.5"/><rect x="292" y="817.5" width="2" height="1.5"/><rect x="292" y="821.8" width="2" height="1.5"/><rect x="296" y="817.5" width="2" height="1.5"/><rect x="296" y="821.8" width="2" height="1.5"/><rect x="300" y="817.5" width="2" height="1.5"/><rect x="300" y="821.8" width="2" height="1.5"/><rect x="304" y="817.5" width="2" height="1.5"/><rect x="304" y="821.8" width="2" height="1.5"/><rect x="308" y="817.5" width="2" height="1.5"/><rect x="308" y="821.8" width="2" height="1.5"/><rect x="312" y="817.5" width="2" height="1.5"/><rect x="312" y="821.8" width="2" height="1.5"/><rect x="316" y="817.5" width="2" height="1.5"/><rect x="316" y="821.8" width="2" height="1.5"/><rect x="320" y="817.5" width="2" height="1.5"/><rect x="320" y="821.8" width="2" height="1.5"/><rect x="324" y="817.5" width="2" height="1.5"/><rect x="324" y="821.8" width="2" height="1.5"/><rect x="328" y="817.5" width="2" height="1.5"/><rect x="328" y="821.8" width="2" height="1.5"/><rect x="332" y="817.5" width="2" height="1.5"/><rect x="332" y="821.8" width="2" height="1.5"/><rect x="336" y="817.5" width="2" height="1.5"/><rect x="336" y="821.8" width="2" height="1.5"/><rect x="340" y="817.5" width="2" height="1.5"/><rect x="340" y="821.8" width="2" height="1.5"/><rect x="344" y="817.5" width="2" height="1.5"/><rect x="344" y="821.8" width="2" height="1.5"/><rect x="348" y="817.5" width="2" height="1.5"/><rect x="348" y="821.8" width="2" height="1.5"/><rect x="352" y="817.5" width="2" height="1.5"/><rect x="352" y="821.8" width="2" height="1.5"/><rect x="356" y="817.5" width="2" height="1.5"/><rect x="356" y="821.8" width="2" height="1.5"/><rect x="360" y="817.5" width="2" height="1.5"/><rect x="360" y="821.8" width="2" height="1.5"/><rect x="364" y="817.5" width="2" height="1.5"/><rect x="364" y="821.8" width="2" height="1.5"/><rect x="368" y="817.5" width="2" height="1.5"/><rect x="368" y="821.8" width="2" height="1.5"/><rect x="372" y="817.5" width="2" height="1.5"/><rect x="372" y="821.8" width="2" height="1.5"/><rect x="376" y="817.5" width="2" height="1.5"/><rect x="376" y="821.8" width="2" height="1.5"/><rect x="380" y="817.5" width="2" height="1.5"/><rect x="380" y="821.8" width="2" height="1.5"/><rect x="384" y="817.5" width="2" height="1.5"/><rect x="384" y="821.8" width="2" height="1.5"/><rect x="388" y="817.5" width="2" height="1.5"/><rect x="388" y="821.8" width="2" height="1.5"/><rect x="392" y="817.5" width="2" height="1.5"/><rect x="392" y="821.8" width="2" height="1.5"/><rect x="396" y="817.5" width="2" height="1.5"/><rect x="396" y="821.8" width="2" height="1.5"/><rect x="400" y="817.5" width="2" height="1.5"/><rect x="400" y="821.8" width="2" height="1.5"/><rect x="404" y="817.5" width="2" height="1.5"/><rect x="404" y="821.8" width="2" height="1.5"/><rect x="408" y="817.5" width="2" height="1.5"/><rect x="408" y="821.8" width="2" height="1.5"/><rect x="412" y="817.5" width="2" height="1.5"/><rect x="412" y="821.8" width="2" height="1.5"/><rect x="416" y="817.5" width="2" height="1.5"/><rect x="416" y="821.8" width="2" height="1.5"/><rect x="420" y="817.5" width="2" height="1.5"/><rect x="420" y="821.8" width="2" height="1.5"/><rect x="424" y="817.5" width="2" height="1.5"/><rect x="424" y="821.8" width="2" height="1.5"/><rect x="428" y="817.5" width="2" height="1.5"/><rect x="428" y="821.8" width="2" height="1.5"/><rect x="432" y="817.5" width="2" height="1.5"/><rect x="432" y="821.8" width="2" height="1.5"/><rect x="436" y="817.5" width="2" height="1.5"/><rect x="436" y="821.8" width="2" height="1.5"/><rect x="440" y="817.5" width="2" height="1.5"/><rect x="440" y="821.8" width="2" height="1.5"/><rect x="444" y="817.5" width="2" height="1.5"/><rect x="444" y="821.8" width="2" height="1.5"/><rect x="448" y="817.5" width="2" height="1.5"/><rect x="448" y="821.8" width="2" height="1.5"/><rect x="452" y="817.5" width="2" height="1.5"/><rect x="452" y="821.8" width="2" height="1.5"/><rect x="456" y="817.5" width="2" height="1.5"/><rect x="456" y="821.8" width="2" height="1.5"/><rect x="460" y="817.5" width="2" height="1.5"/><rect x="460" y="821.8" width="2" height="1.5"/><rect x="464" y="817.5" width="2" height="1.5"/><rect x="464" y="821.8" width="2" height="1.5"/><rect x="468" y="817.5" width="2" height="1.5"/><rect x="468" y="821.8" width="2" height="1.5"/><rect x="472" y="817.5" width="2" height="1.5"/><rect x="472" y="821.8" width="2" height="1.5"/><rect x="476" y="817.5" width="2" height="1.5"/><rect x="476" y="821.8" width="2" height="1.5"/><rect x="480" y="817.5" width="2" height="1.5"/><rect x="480" y="821.8" width="2" height="1.5"/><rect x="484" y="817.5" width="2" height="1.5"/><rect x="484" y="821.8" width="2" height="1.5"/><rect x="488" y="817.5" width="2" height="1.5"/><rect x="488" y="821.8" width="2" height="1.5"/><rect x="492" y="817.5" width="2" height="1.5"/><rect x="492" y="821.8" width="2" height="1.5"/><rect x="496" y="817.5" width="2" height="1.5"/><rect x="496" y="821.8" width="2" height="1.5"/><rect x="500" y="817.5" width="2" height="1.5"/><rect x="500" y="821.8" width="2" height="1.5"/><rect x="504" y="817.5" width="2" height="1.5"/><rect x="504" y="821.8" width="2" height="1.5"/><rect x="508" y="817.5" width="2" height="1.5"/><rect x="508" y="821.8" width="2" height="1.5"/><rect x="512" y="817.5" width="2" height="1.5"/><rect x="512" y="821.8" width="2" height="1.5"/><rect x="516" y="817.5" width="2" height="1.5"/><rect x="516" y="821.8" width="2" height="1.5"/><rect x="520" y="817.5" width="2" height="1.5"/><rect x="520" y="821.8" width="2" height="1.5"/><rect x="524" y="817.5" width="2" height="1.5"/><rect x="524" y="821.8" width="2" height="1.5"/><rect x="528" y="817.5" width="2" height="1.5"/><rect x="528" y="821.8" width="2" height="1.5"/><rect x="532" y="817.5" width="2" height="1.5"/><rect x="532" y="821.8" width="2" height="1.5"/><rect x="536" y="817.5" width="2" height="1.5"/><rect x="536" y="821.8" width="2" height="1.5"/><rect x="540" y="817.5" width="2" height="1.5"/><rect x="540" y="821.8" width="2" height="1.5"/><rect x="544" y="817.5" width="2" height="1.5"/><rect x="544" y="821.8" width="2" height="1.5"/><rect x="548" y="817.5" width="2" height="1.5"/><rect x="548" y="821.8" width="2" height="1.5"/><rect x="552" y="817.5" width="2" height="1.5"/><rect x="552" y="821.8" width="2" height="1.5"/><rect x="556" y="817.5" width="2" height="1.5"/><rect x="556" y="821.8" width="2" height="1.5"/><rect x="560" y="817.5" width="2" height="1.5"/><rect x="560" y="821.8" width="2" height="1.5"/><rect x="564" y="817.5" width="2" height="1.5"/><rect x="564" y="821.8" width="2" height="1.5"/><rect x="568" y="817.5" width="2" height="1.5"/><rect x="568" y="821.8" width="2" height="1.5"/><rect x="572" y="817.5" width="2" height="1.5"/><rect x="572" y="821.8" width="2" height="1.5"/><rect x="576" y="817.5" width="2" height="1.5"/><rect x="576" y="821.8" width="2" height="1.5"/><rect x="580" y="817.5" width="2" height="1.5"/><rect x="580" y="821.8" width="2" height="1.5"/><rect x="584" y="817.5" width="2" height="1.5"/><rect x="584" y="821.8" width="2" height="1.5"/><rect x="588" y="817.5" width="2" height="1.5"/><rect x="588" y="821.8" width="2" height="1.5"/><rect x="592" y="817.5" width="2" height="1.5"/><rect x="592" y="821.8" width="2" height="1.5"/><rect x="596" y="817.5" width="2" height="1.5"/><rect x="596" y="821.8" width="2" height="1.5"/><rect x="600" y="817.5" width="2" height="1.5"/><rect x="600" y="821.8" width="2" height="1.5"/><rect x="604" y="817.5" width="2" height="1.5"/><rect x="604" y="821.8" width="2" height="1.5"/><rect x="608" y="817.5" width="2" height="1.5"/><rect x="608" y="821.8" width="2" height="1.5"/><rect x="612" y="817.5" width="2" height="1.5"/><rect x="612" y="821.8" width="2" height="1.5"/><rect x="616" y="817.5" width="2" height="1.5"/><rect x="616" y="821.8" width="2" height="1.5"/><rect x="620" y="817.5" width="2" height="1.5"/><rect x="620" y="821.8" width="2" height="1.5"/><rect x="624" y="817.5" width="2" height="1.5"/><rect x="624" y="821.8" width="2" height="1.5"/><rect x="628" y="817.5" width="2" height="1.5"/><rect x="628" y="821.8" width="2" height="1.5"/><rect x="632" y="817.5" width="2" height="1.5"/><rect x="632" y="821.8" width="2" height="1.5"/><rect x="636" y="817.5" width="2" height="1.5"/><rect x="636" y="821.8" width="2" height="1.5"/><rect x="640" y="817.5" width="2" height="1.5"/><rect x="640" y="821.8" width="2" height="1.5"/><rect x="644" y="817.5" width="2" height="1.5"/><rect x="644" y="821.8" width="2" height="1.5"/><rect x="648" y="817.5" width="2" height="1.5"/><rect x="648" y="821.8" width="2" height="1.5"/><rect x="652" y="817.5" width="2" height="1.5"/><rect x="652" y="821.8" width="2" height="1.5"/><rect x="656" y="817.5" width="2" height="1.5"/><rect x="656" y="821.8" width="2" height="1.5"/><rect x="660" y="817.5" width="2" height="1.5"/><rect x="660" y="821.8" width="2" height="1.5"/><rect x="664" y="817.5" width="2" height="1.5"/><rect x="664" y="821.8" width="2" height="1.5"/><rect x="668" y="817.5" width="2" height="1.5"/><rect x="668" y="821.8" width="2" height="1.5"/><rect x="672" y="817.5" width="2" height="1.5"/><rect x="672" y="821.8" width="2" height="1.5"/><rect x="676" y="817.5" width="2" height="1.5"/><rect x="676" y="821.8" width="2" height="1.5"/><rect x="680" y="817.5" width="2" height="1.5"/><rect x="680" y="821.8" width="2" height="1.5"/><rect x="684" y="817.5" width="2" height="1.5"/><rect x="684" y="821.8" width="2" height="1.5"/><rect x="688" y="817.5" width="2" height="1.5"/><rect x="688" y="821.8" width="2" height="1.5"/><rect x="692" y="817.5" width="2" height="1.5"/><rect x="692" y="821.8" width="2" height="1.5"/><rect x="696" y="817.5" width="2" height="1.5"/><rect x="696" y="821.8" width="2" height="1.5"/><rect x="700" y="817.5" width="2" height="1.5"/><rect x="700" y="821.8" width="2" height="1.5"/><rect x="704" y="817.5" width="2" height="1.5"/><rect x="704" y="821.8" width="2" height="1.5"/><rect x="708" y="817.5" width="2" height="1.5"/><rect x="708" y="821.8" width="2" height="1.5"/><rect x="712" y="817.5" width="2" height="1.5"/><rect x="712" y="821.8" width="2" height="1.5"/><rect x="716" y="817.5" width="2" height="1.5"/><rect x="716" y="821.8" width="2" height="1.5"/><rect x="720" y="817.5" width="2" height="1.5"/><rect x="720" y="821.8" width="2" height="1.5"/><rect x="724" y="817.5" width="2" height="1.5"/><rect x="724" y="821.8" width="2" height="1.5"/><rect x="728" y="817.5" width="2" height="1.5"/><rect x="728" y="821.8" width="2" height="1.5"/><rect x="732" y="817.5" width="2" height="1.5"/><rect x="732" y="821.8" width="2" height="1.5"/><rect x="736" y="817.5" width="2" height="1.5"/><rect x="736" y="821.8" width="2" height="1.5"/><rect x="740" y="817.5" width="2" height="1.5"/><rect x="740" y="821.8" width="2" height="1.5"/><rect x="744" y="817.5" width="2" height="1.5"/><rect x="744" y="821.8" width="2" height="1.5"/><rect x="748" y="817.5" width="2" height="1.5"/><rect x="748" y="821.8" width="2" height="1.5"/><rect x="752" y="817.5" width="2" height="1.5"/><rect x="752" y="821.8" width="2" height="1.5"/><rect x="756" y="817.5" width="2" height="1.5"/><rect x="756" y="821.8" width="2" height="1.5"/><rect x="760" y="817.5" width="2" height="1.5"/><rect x="760" y="821.8" width="2" height="1.5"/><rect x="764" y="817.5" width="2" height="1.5"/><rect x="764" y="821.8" width="2" height="1.5"/><rect x="768" y="817.5" width="2" height="1.5"/><rect x="768" y="821.8" width="2" height="1.5"/><rect x="772" y="817.5" width="2" height="1.5"/><rect x="772" y="821.8" width="2" height="1.5"/><rect x="776" y="817.5" width="2" height="1.5"/><rect x="776" y="821.8" width="2" height="1.5"/><rect x="780" y="817.5" width="2" height="1.5"/><rect x="780" y="821.8" width="2" height="1.5"/><rect x="784" y="817.5" width="2" height="1.5"/><rect x="784" y="821.8" width="2" height="1.5"/><rect x="788" y="817.5" width="2" height="1.5"/><rect x="788" y="821.8" width="2" height="1.5"/><rect x="792" y="817.5" width="2" height="1.5"/><rect x="792" y="821.8" width="2" height="1.5"/><rect x="796" y="817.5" width="2" height="1.5"/><rect x="796" y="821.8" width="2" height="1.5"/><rect x="800" y="817.5" width="2" height="1.5"/><rect x="800" y="821.8" width="2" height="1.5"/><rect x="804" y="817.5" width="2" height="1.5"/><rect x="804" y="821.8" width="2" height="1.5"/><rect x="808" y="817.5" width="2" height="1.5"/><rect x="808" y="821.8" width="2" height="1.5"/><rect x="812" y="817.5" width="2" height="1.5"/><rect x="812" y="821.8" width="2" height="1.5"/><rect x="816" y="817.5" width="2" height="1.5"/><rect x="816" y="821.8" width="2" height="1.5"/><rect x="820" y="817.5" width="2" height="1.5"/><rect x="820" y="821.8" width="2" height="1.5"/><rect x="824" y="817.5" width="2" height="1.5"/><rect x="824" y="821.8" width="2" height="1.5"/><rect x="828" y="817.5" width="2" height="1.5"/><rect x="828" y="821.8" width="2" height="1.5"/><rect x="832" y="817.5" width="2" height="1.5"/><rect x="832" y="821.8" width="2" height="1.5"/><rect x="836" y="817.5" width="2" height="1.5"/><rect x="836" y="821.8" width="2" height="1.5"/><rect x="840" y="817.5" width="2" height="1.5"/><rect x="840" y="821.8" width="2" height="1.5"/><rect x="844" y="817.5" width="2" height="1.5"/><rect x="844" y="821.8" width="2" height="1.5"/><rect x="848" y="817.5" width="2" height="1.5"/><rect x="848" y="821.8" width="2" height="1.5"/><rect x="852" y="817.5" width="2" height="1.5"/><rect x="852" y="821.8" width="2" height="1.5"/><rect x="856" y="817.5" width="2" height="1.5"/><rect x="856" y="821.8" width="2" height="1.5"/><rect x="860" y="817.5" width="2" height="1.5"/><rect x="860" y="821.8" width="2" height="1.5"/><rect x="864" y="817.5" width="2" height="1.5"/><rect x="864" y="821.8" width="2" height="1.5"/><rect x="868" y="817.5" width="2" height="1.5"/><rect x="868" y="821.8" width="2" height="1.5"/><rect x="872" y="817.5" width="2" height="1.5"/><rect x="872" y="821.8" width="2" height="1.5"/><rect x="876" y="817.5" width="2" height="1.5"/><rect x="876" y="821.8" width="2" height="1.5"/><rect x="880" y="817.5" width="2" height="1.5"/><rect x="880" y="821.8" width="2" height="1.5"/><rect x="884" y="817.5" width="2" height="1.5"/><rect x="884" y="821.8" width="2" height="1.5"/><rect x="888" y="817.5" width="2" height="1.5"/><rect x="888" y="821.8" width="2" height="1.5"/><rect x="892" y="817.5" width="2" height="1.5"/><rect x="892" y="821.8" width="2" height="1.5"/><rect x="896" y="817.5" width="2" height="1.5"/><rect x="896" y="821.8" width="2" height="1.5"/><rect x="900" y="817.5" width="2" height="1.5"/><rect x="900" y="821.8" width="2" height="1.5"/><rect x="904" y="817.5" width="2" height="1.5"/><rect x="904" y="821.8" width="2" height="1.5"/><rect x="908" y="817.5" width="2" height="1.5"/><rect x="908" y="821.8" width="2" height="1.5"/><rect x="912" y="817.5" width="2" height="1.5"/><rect x="912" y="821.8" width="2" height="1.5"/><rect x="916" y="817.5" width="2" height="1.5"/><rect x="916" y="821.8" width="2" height="1.5"/><rect x="920" y="817.5" width="2" height="1.5"/><rect x="920" y="821.8" width="2" height="1.5"/><rect x="924" y="817.5" width="2" height="1.5"/><rect x="924" y="821.8" width="2" height="1.5"/><rect x="928" y="817.5" width="2" height="1.5"/><rect x="928" y="821.8" width="2" height="1.5"/><rect x="932" y="817.5" width="2" height="1.5"/><rect x="932" y="821.8" width="2" height="1.5"/><rect x="936" y="817.5" width="2" height="1.5"/><rect x="936" y="821.8" width="2" height="1.5"/><rect x="940" y="817.5" width="2" height="1.5"/><rect x="940" y="821.8" width="2" height="1.5"/><rect x="944" y="817.5" width="2" height="1.5"/><rect x="944" y="821.8" width="2" height="1.5"/><rect x="948" y="817.5" width="2" height="1.5"/><rect x="948" y="821.8" width="2" height="1.5"/><rect x="952" y="817.5" width="2" height="1.5"/><rect x="952" y="821.8" width="2" height="1.5"/><rect x="956" y="817.5" width="2" height="1.5"/><rect x="956" y="821.8" width="2" height="1.5"/><rect x="960" y="817.5" width="2" height="1.5"/><rect x="960" y="821.8" width="2" height="1.5"/><rect x="964" y="817.5" width="2" height="1.5"/><rect x="964" y="821.8" width="2" height="1.5"/><rect x="968" y="817.5" width="2" height="1.5"/><rect x="968" y="821.8" width="2" height="1.5"/><rect x="972" y="817.5" width="2" height="1.5"/><rect x="972" y="821.8" width="2" height="1.5"/><rect x="976" y="817.5" width="2" height="1.5"/><rect x="976" y="821.8" width="2" height="1.5"/><rect x="980" y="817.5" width="2" height="1.5"/><rect x="980" y="821.8" width="2" height="1.5"/><rect x="984" y="817.5" width="2" height="1.5"/><rect x="984" y="821.8" width="2" height="1.5"/><rect x="988" y="817.5" width="2" height="1.5"/><rect x="988" y="821.8" width="2" height="1.5"/><rect x="992" y="817.5" width="2" height="1.5"/><rect x="992" y="821.8" width="2" height="1.5"/><rect x="996" y="817.5" width="2" height="1.5"/><rect x="996" y="821.8" width="2" height="1.5"/><rect x="1000" y="817.5" width="2" height="1.5"/><rect x="1000" y="821.8" width="2" height="1.5"/><rect x="1004" y="817.5" width="2" height="1.5"/><rect x="1004" y="821.8" width="2" height="1.5"/><rect x="1008" y="817.5" width="2" height="1.5"/><rect x="1008" y="821.8" width="2" height="1.5"/><rect x="1012" y="817.5" width="2" height="1.5"/><rect x="1012" y="821.8" width="2" height="1.5"/><rect x="1016" y="817.5" width="2" height="1.5"/><rect x="1016" y="821.8" width="2" height="1.5"/><rect x="1020" y="817.5" width="2" height="1.5"/><rect x="1020" y="821.8" width="2" height="1.5"/><rect x="1024" y="817.5" width="2" height="1.5"/><rect x="1024" y="821.8" width="2" height="1.5"/><rect x="1028" y="817.5" width="2" height="1.5"/><rect x="1028" y="821.8" width="2" height="1.5"/><rect x="1032" y="817.5" width="2" height="1.5"/><rect x="1032" y="821.8" width="2" height="1.5"/><rect x="1036" y="817.5" width="2" height="1.5"/><rect x="1036" y="821.8" width="2" height="1.5"/><rect x="1040" y="817.5" width="2" height="1.5"/><rect x="1040" y="821.8" width="2" height="1.5"/><rect x="1044" y="817.5" width="2" height="1.5"/><rect x="1044" y="821.8" width="2" height="1.5"/><rect x="1048" y="817.5" width="2" height="1.5"/><rect x="1048" y="821.8" width="2" height="1.5"/><rect x="1052" y="817.5" width="2" height="1.5"/><rect x="1052" y="821.8" width="2" height="1.5"/><rect x="1056" y="817.5" width="2" height="1.5"/><rect x="1056" y="821.8" width="2" height="1.5"/><rect x="1060" y="817.5" width="2" height="1.5"/><rect x="1060" y="821.8" width="2" height="1.5"/><rect x="1064" y="817.5" width="2" height="1.5"/><rect x="1064" y="821.8" width="2" height="1.5"/><rect x="1068" y="817.5" width="2" height="1.5"/><rect x="1068" y="821.8" width="2" height="1.5"/><rect x="1072" y="817.5" width="2" height="1.5"/><rect x="1072" y="821.8" width="2" height="1.5"/><rect x="1076" y="817.5" width="2" height="1.5"/><rect x="1076" y="821.8" width="2" height="1.5"/><rect x="1080" y="817.5" width="2" height="1.5"/><rect x="1080" y="821.8" width="2" height="1.5"/><rect x="1084" y="817.5" width="2" height="1.5"/><rect x="1084" y="821.8" width="2" height="1.5"/><rect x="1088" y="817.5" width="2" height="1.5"/><rect x="1088" y="821.8" width="2" height="1.5"/><rect x="1092" y="817.5" width="2" height="1.5"/><rect x="1092" y="821.8" width="2" height="1.5"/><rect x="1096" y="817.5" width="2" height="1.5"/><rect x="1096" y="821.8" width="2" height="1.5"/><rect x="1100" y="817.5" width="2" height="1.5"/><rect x="1100" y="821.8" width="2" height="1.5"/><rect x="1104" y="817.5" width="2" height="1.5"/><rect x="1104" y="821.8" width="2" height="1.5"/><rect x="1108" y="817.5" width="2" height="1.5"/><rect x="1108" y="821.8" width="2" height="1.5"/><rect x="1112" y="817.5" width="2" height="1.5"/><rect x="1112" y="821.8" width="2" height="1.5"/><rect x="1116" y="817.5" width="2" height="1.5"/><rect x="1116" y="821.8" width="2" height="1.5"/><rect x="1120" y="817.5" width="2" height="1.5"/><rect x="1120" y="821.8" width="2" height="1.5"/><rect x="1124" y="817.5" width="2" height="1.5"/><rect x="1124" y="821.8" width="2" height="1.5"/><rect x="1128" y="817.5" width="2" height="1.5"/><rect x="1128" y="821.8" width="2" height="1.5"/><rect x="1132" y="817.5" width="2" height="1.5"/><rect x="1132" y="821.8" width="2" height="1.5"/><rect x="1136" y="817.5" width="2" height="1.5"/><rect x="1136" y="821.8" width="2" height="1.5"/><rect x="1140" y="817.5" width="2" height="1.5"/><rect x="1140" y="821.8" width="2" height="1.5"/><rect x="1144" y="817.5" width="2" height="1.5"/><rect x="1144" y="821.8" width="2" height="1.5"/><rect x="1148" y="817.5" width="2" height="1.5"/><rect x="1148" y="821.8" width="2" height="1.5"/><rect x="1152" y="817.5" width="2" height="1.5"/><rect x="1152" y="821.8" width="2" height="1.5"/><rect x="1156" y="817.5" width="2" height="1.5"/><rect x="1156" y="821.8" width="2" height="1.5"/><rect x="1160" y="817.5" width="2" height="1.5"/><rect x="1160" y="821.8" width="2" height="1.5"/><rect x="1164" y="817.5" width="2" height="1.5"/><rect x="1164" y="821.8" width="2" height="1.5"/><rect x="1168" y="817.5" width="2" height="1.5"/><rect x="1168" y="821.8" width="2" height="1.5"/><rect x="1172" y="817.5" width="2" height="1.5"/><rect x="1172" y="821.8" width="2" height="1.5"/><rect x="1176" y="817.5" width="2" height="1.5"/><rect x="1176" y="821.8" width="2" height="1.5"/><rect x="1180" y="817.5" width="2" height="1.5"/><rect x="1180" y="821.8" width="2" height="1.5"/><rect x="1184" y="817.5" width="2" height="1.5"/><rect x="1184" y="821.8" width="2" height="1.5"/><rect x="1188" y="817.5" width="2" height="1.5"/><rect x="1188" y="821.8" width="2" height="1.5"/><rect x="1192" y="817.5" width="2" height="1.5"/><rect x="1192" y="821.8" width="2" height="1.5"/><rect x="1196" y="817.5" width="2" height="1.5"/><rect x="1196" y="821.8" width="2" height="1.5"/><rect x="1200" y="817.5" width="2" height="1.5"/><rect x="1200" y="821.8" width="2" height="1.5"/><rect x="1204" y="817.5" width="2" height="1.5"/><rect x="1204" y="821.8" width="2" height="1.5"/><rect x="1208" y="817.5" width="2" height="1.5"/><rect x="1208" y="821.8" width="2" height="1.5"/><rect x="1212" y="817.5" width="2" height="1.5"/><rect x="1212" y="821.8" width="2" height="1.5"/><rect x="1216" y="817.5" width="2" height="1.5"/><rect x="1216" y="821.8" width="2" height="1.5"/><rect x="1220" y="817.5" width="2" height="1.5"/><rect x="1220" y="821.8" width="2" height="1.5"/><rect x="1224" y="817.5" width="2" height="1.5"/><rect x="1224" y="821.8" width="2" height="1.5"/><rect x="1228" y="817.5" width="2" height="1.5"/><rect x="1228" y="821.8" width="2" height="1.5"/><rect x="1232" y="817.5" width="2" height="1.5"/><rect x="1232" y="821.8" width="2" height="1.5"/><rect x="1236" y="817.5" width="2" height="1.5"/><rect x="1236" y="821.8" width="2" height="1.5"/><rect x="1240" y="817.5" width="2" height="1.5"/><rect x="1240" y="821.8" width="2" height="1.5"/><rect x="1244" y="817.5" width="2" height="1.5"/><rect x="1244" y="821.8" width="2" height="1.5"/><rect x="1248" y="817.5" width="2" height="1.5"/><rect x="1248" y="821.8" width="2" height="1.5"/><rect x="1252" y="817.5" width="2" height="1.5"/><rect x="1252" y="821.8" width="2" height="1.5"/><rect x="1256" y="817.5" width="2" height="1.5"/><rect x="1256" y="821.8" width="2" height="1.5"/><rect x="1260" y="817.5" width="2" height="1.5"/><rect x="1260" y="821.8" width="2" height="1.5"/><rect x="1264" y="817.5" width="2" height="1.5"/><rect x="1264" y="821.8" width="2" height="1.5"/><rect x="1268" y="817.5" width="2" height="1.5"/><rect x="1268" y="821.8" width="2" height="1.5"/><rect x="1272" y="817.5" width="2" height="1.5"/><rect x="1272" y="821.8" width="2" height="1.5"/><rect x="1276" y="817.5" width="2" height="1.5"/><rect x="1276" y="821.8" width="2" height="1.5"/><rect x="1280" y="817.5" width="2" height="1.5"/><rect x="1280" y="821.8" width="2" height="1.5"/><rect x="1284" y="817.5" width="2" height="1.5"/><rect x="1284" y="821.8" width="2" height="1.5"/><rect x="1288" y="817.5" width="2" height="1.5"/><rect x="1288" y="821.8" width="2" height="1.5"/><rect x="1292" y="817.5" width="2" height="1.5"/><rect x="1292" y="821.8" width="2" height="1.5"/><rect x="1296" y="817.5" width="2" height="1.5"/><rect x="1296" y="821.8" width="2" height="1.5"/><rect x="1300" y="817.5" width="2" height="1.5"/><rect x="1300" y="821.8" width="2" height="1.5"/><rect x="1304" y="817.5" width="2" height="1.5"/><rect x="1304" y="821.8" width="2" height="1.5"/><rect x="1308" y="817.5" width="2" height="1.5"/><rect x="1308" y="821.8" width="2" height="1.5"/><rect x="1312" y="817.5" width="2" height="1.5"/><rect x="1312" y="821.8" width="2" height="1.5"/><rect x="1316" y="817.5" width="2" height="1.5"/><rect x="1316" y="821.8" width="2" height="1.5"/><rect x="1320" y="817.5" width="2" height="1.5"/><rect x="1320" y="821.8" width="2" height="1.5"/><rect x="1324" y="817.5" width="2" height="1.5"/><rect x="1324" y="821.8" width="2" height="1.5"/><rect x="1328" y="817.5" width="2" height="1.5"/><rect x="1328" y="821.8" width="2" height="1.5"/><rect x="1332" y="817.5" width="2" height="1.5"/><rect x="1332" y="821.8" width="2" height="1.5"/><rect x="1336" y="817.5" width="2" height="1.5"/><rect x="1336" y="821.8" width="2" height="1.5"/><rect x="1340" y="817.5" width="2" height="1.5"/><rect x="1340" y="821.8" width="2" height="1.5"/><rect x="1344" y="817.5" width="2" height="1.5"/><rect x="1344" y="821.8" width="2" height="1.5"/><rect x="1348" y="817.5" width="2" height="1.5"/><rect x="1348" y="821.8" width="2" height="1.5"/><rect x="1352" y="817.5" width="2" height="1.5"/><rect x="1352" y="821.8" width="2" height="1.5"/><rect x="1356" y="817.5" width="2" height="1.5"/><rect x="1356" y="821.8" width="2" height="1.5"/><rect x="1360" y="817.5" width="2" height="1.5"/><rect x="1360" y="821.8" width="2" height="1.5"/><rect x="1364" y="817.5" width="2" height="1.5"/><rect x="1364" y="821.8" width="2" height="1.5"/><rect x="1368" y="817.5" width="2" height="1.5"/><rect x="1368" y="821.8" width="2" height="1.5"/><rect x="1372" y="817.5" width="2" height="1.5"/><rect x="1372" y="821.8" width="2" height="1.5"/><rect x="1376" y="817.5" width="2" height="1.5"/><rect x="1376" y="821.8" width="2" height="1.5"/><rect x="1380" y="817.5" width="2" height="1.5"/><rect x="1380" y="821.8" width="2" height="1.5"/><rect x="1384" y="817.5" width="2" height="1.5"/><rect x="1384" y="821.8" width="2" height="1.5"/><rect x="1388" y="817.5" width="2" height="1.5"/><rect x="1388" y="821.8" width="2" height="1.5"/><rect x="1392" y="817.5" width="2" height="1.5"/><rect x="1392" y="821.8" width="2" height="1.5"/></g>
<g fill="#4a4a4a"><rect x="48" y="833" width="1.5" height="2"/><rect x="52" y="833" width="1.5" height="2"/><rect x="48" y="837" width="1.5" height="2"/><rect x="52" y="837" width="1.5" height="2"/><rect x="48" y="841" width="1.5" height="2"/><rect x="52" y="841" width="1.5" height="2"/><rect x="48" y="845" width="1.5" height="2"/><rect x="52" y="845" width="1.5" height="2"/><rect x="48" y="849" width="1.5" height="2"/><rect x="52" y="849" width="1.5" height="2"/><rect x="48" y="853" width="1.5" height="2"/><rect x="52" y="853" width="1.5" height="2"/><rect x="48" y="857" width="1.5" height="2"/><rect x="52" y="857" width="1.5" height="2"/><rect x="48" y="861" width="1.5" height="2"/><rect x="52" y="861" width="1.5" height="2"/><rect x="48" y="867" width="1.5" height="2"/><rect x="52" y="867" width="1.5" height="2"/><rect x="48" y="871" width="1.5" height="2"/><rect x="52" y="871" width="1.5" height="2"/><rect x="48" y="875" width="1.5" height="2"/><rect x="52" y="875" width="1.5" height="2"/><rect x="48" y="879" width="1.5" height="2"/><rect x="52" y="879" width="1.5" height="2"/><rect x="48" y="883" width="1.5" height="2"/><rect x="52" y="883" width="1.5" height="2"/><rect x="48" y="887" width="1.5" height="2"/><rect x="52" y="887" width="1.5" height="2"/><rect x="48" y="891" width="1.5" height="2"/><rect x="52" y="891" width="1.5" height="2"/><rect x="48" y="895" width="1.5" height="2"/><rect x="52" y="895" width="1.5" height="2"/><rect x="48" y="899" width="1.5" height="2"/><rect x="52" y="899" width="1.5" height="2"/><rect x="48" y="903" width="1.5" height="2"/><rect x="52" y="903" width="1.5" height="2"/><rect x="48" y="907" width="1.5" height="2"/><rect x="52" y="907" width="1.5" height="2"/><rect x="48" y="911" width="1.5" height="2"/><rect x="52" y="911" width="1.5" height="2"/><rect x="48" y="915" width="1.5" height="2"/><rect x="52" y="915" width="1.5" height="2"/><rect x="48" y="919" width="1.5" height="2"/><rect x="52" y="919" width="1.5" height="2"/></g>
<path d="M73.5,835 L82,844.5 L73.5,854 L65,844.5 Z" fill="none" stroke="#d8d8d8" stroke-width="2"/>
<g fill="none" stroke="#c8c8c8" stroke-width="1.8"><line x1="340.43" y1="836.2" x2="340.43" y2="852.2"/><path d="M355.43,836.2 L344.43,844.2 L355.43,852.2 Z"/><path d="M392.29,836.2 L383.29,844.2 L392.29,852.2 Z"/><path d="M421.15,836.2 L411.15,844.2 L421.15,852.2 Z"/><line x1="426.15" y1="836.2" x2="426.15" y2="852.2"/><path d="M447.01,835.2 L461.01,844.2 L447.01,853.2 Z"/><line x1="479.87" y1="836.2" x2="479.87" y2="852.2"/><path d="M484.87,836.2 L494.87,844.2 L484.87,852.2 Z"/><path d="M513.73,836.2 L522.73,844.2 L513.73,852.2 Z"/><path d="M550.59,836.2 L561.59,844.2 L550.59,852.2 Z"/><line x1="565.59" y1="836.2" x2="565.59" y2="852.2"/></g>
<path d="M373.29,844.2 L378.29,839.2 L383.29,844.2 L378.29,849.2 Z" fill="#c8c8c8"/><path d="M523.73,844.2 L528.73,839.2 L533.73,844.2 L528.73,849.2 Z" fill="#c8c8c8"/>
<g fill="none" stroke="#e0e0e0" stroke-width="2"><path d="M597,841 V837 H614 M610,833 L614,837 L610,841"/><path d="M615,848 V852 H598 M602,848 L598,852 L602,856"/></g>
<text x="641" y="840" font-family="Liberation Sans" font-size="10" fill="#e0e0e0" text-anchor="middle">A</text><g fill="#e0e0e0"><rect x="631" y="845" width="2.5" height="6"/><rect x="636" y="847" width="2.5" height="4"/><rect x="641" y="847" width="2.5" height="4"/><rect x="646" y="845" width="5" height="6"/></g>
<path d="M667,840 H671 L677,835 V853 L671,848 H667 Z" fill="none" stroke="#c8c8c8" stroke-width="1.8"/><path d="M680,839 A6,6 0 0 1 680,849 M683,836 A10,10 0 0 1 683,852" fill="none" stroke="#c8c8c8" stroke-width="1.8"/>
<circle cx="831" cy="844.2" r="10" fill="none" stroke="#e05a4a" stroke-width="2"/><path d="M831,838.5 L836.5,844.2 L831,850 L825.5,844.2 Z" fill="#d8d8d8"/>
<circle cx="866" cy="844.2" r="10" fill="none" stroke="#e05a4a" stroke-width="2"/><text x="866" y="849.5" font-family="Liberation Sans" font-size="14" fill="#d8d8d8" text-anchor="middle">A</text>
<circle cx="901" cy="844.2" r="10" fill="none" stroke="#c8c8c8" stroke-width="2"/>
<polygon points="905.54,842.62 907.35,842.81 907.35,845.59 905.54,845.78 905.33,846.30 906.47,847.70 904.50,849.67 903.10,848.53 902.58,848.74 902.39,850.55 899.61,850.55 899.42,848.74 898.90,848.53 897.50,849.67 895.53,847.70 896.67,846.30 896.46,845.78 894.65,845.59 894.65,842.81 896.46,842.62 896.67,842.10 895.53,840.70 897.50,838.73 898.90,839.87 899.42,839.66 899.61,837.85 902.39,837.85 902.58,839.66 903.10,839.87 904.50,838.73 906.47,840.70 905.33,842.10" fill="#c8c8c8"/><circle cx="901" cy="844.2" r="2.34" fill="#3a3a3a"/>
<path d="M844,853 L848,849 L848,853 Z" fill="#a0a0a0"/>
<g fill="none" stroke="#d8d8d8" stroke-width="1.8"><path d="M961,834 L971,844 L961,854 L951,844 Z"/></g><path d="M961,839 L966,844 L961,849 L956,844 Z" fill="#d8d8d8"/>
<g fill="none" stroke="#e0e0e0" stroke-width="2"><path d="M988,846 A9,9 0 0 1 1003,836 M1005,842 A9,9 0 0 1 990,852"/><line x1="986" y1="834" x2="1008" y2="855"/></g>
<g fill="none" stroke="#e0e0e0" stroke-width="2"><path d="M1020,836 H1040 V856"/><line x1="1020" y1="834" x2="1042" y2="855"/></g><path d="M1020,848 L1026,842 L1032,848 L1026,854 Z" fill="#e0e0e0"/>
<rect x="1052" y="835" width="26" height="7.5" rx="3.7" fill="#d8d8d8"/><rect x="1052" y="846" width="26" height="7.5" rx="3.7" fill="#d8d8d8"/><circle cx="1057" cy="838.7" r="2.2" fill="#3a3a3a"/><circle cx="1073" cy="849.7" r="2.2" fill="#3a3a3a"/>
<g fill="#e0e0e0"><circle cx="1094" cy="851" r="3.5"/><circle cx="1104" cy="851" r="3.5"/></g><line x1="1090" y1="834" x2="1111" y2="856" stroke="#e0e0e0" stroke-width="2"/><path d="M1096,838 L1100,834 L1104,838" fill="none" stroke="#e0e0e0" stroke-width="1.8"/>
<g fill="none" stroke="#c8c8c8" stroke-width="2"><path d="M1366,834 V855 H1387"/><line x1="1368" y1="852" x2="1385" y2="836"/><path d="M1378,836 H1385 V843"/></g>
<g><rect x="67.7" y="887.3" width="1" height="4" fill="#9a9a9a"/><rect x="73.9" y="887.3" width="1" height="4" fill="#9a9a9a"/><rect x="80.1" y="887.3" width="1" height="4" fill="#9a9a9a"/><rect x="86.3" y="887.3" width="1" height="4" fill="#9a9a9a"/><rect x="92.6" y="887.3" width="1" height="4" fill="#9a9a9a"/><rect x="98.8" y="887.3" width="1" height="4" fill="#9a9a9a"/><rect x="105.0" y="887.3" width="1" height="4" fill="#9a9a9a"/><rect x="111.2" y="887.3" width="1" height="4" fill="#9a9a9a"/><rect x="117.4" y="887.3" width="1" height="4" fill="#9a9a9a"/><rect x="123.6" y="887.3" width="1" height="4" fill="#9a9a9a"/><rect x="129.9" y="887.3" width="1" height="4" fill="#9a9a9a"/><rect x="136.1" y="887.3" width="1" height="4" fill="#9a9a9a"/><rect x="142.3" y="887.3" width="1" height="4" fill="#9a9a9a"/><rect x="148.5" y="887.3" width="1" height="4" fill="#9a9a9a"/><rect x="154.7" y="887.3" width="1" height="4" fill="#9a9a9a"/><rect x="161.0" y="887.3" width="1" height="4" fill="#9a9a9a"/><rect x="167.2" y="887.3" width="1" height="4" fill="#9a9a9a"/><rect x="173.4" y="887.3" width="1" height="4" fill="#9a9a9a"/><rect x="179.6" y="887.3" width="1" height="4" fill="#9a9a9a"/><rect x="185.8" y="887.3" width="1" height="4" fill="#9a9a9a"/><rect x="192.0" y="887.3" width="1" height="4" fill="#9a9a9a"/><rect x="198.3" y="887.3" width="1" height="4" fill="#9a9a9a"/><rect x="204.5" y="887.3" width="1" height="4" fill="#9a9a9a"/><rect x="210.7" y="887.3" width="1" height="4" fill="#9a9a9a"/><rect x="216.9" y="887.3" width="1" height="4" fill="#9a9a9a"/><rect x="223.1" y="887.3" width="1" height="4" fill="#9a9a9a"/><rect x="229.3" y="887.3" width="1" height="4" fill="#9a9a9a"/><rect x="235.6" y="887.3" width="1" height="4" fill="#9a9a9a"/><rect x="241.8" y="887.3" width="1" height="4" fill="#9a9a9a"/><rect x="248.0" y="887.3" width="1" height="4" fill="#9a9a9a"/><rect x="254.2" y="887.3" width="1" height="4" fill="#9a9a9a"/><rect x="260.4" y="887.3" width="1" height="4" fill="#9a9a9a"/><rect x="266.7" y="887.3" width="1" height="4" fill="#9a9a9a"/><rect x="272.9" y="887.3" width="1" height="4" fill="#9a9a9a"/><rect x="279.1" y="887.3" width="1" height="4" fill="#9a9a9a"/><rect x="285.3" y="887.3" width="1" height="4" fill="#9a9a9a"/><rect x="291.5" y="887.3" width="1" height="4" fill="#9a9a9a"/><rect x="297.7" y="887.3" width="1" height="4" fill="#9a9a9a"/><rect x="304.0" y="887.3" width="1" height="4" fill="#9a9a9a"/><rect x="310.2" y="887.3" width="1" height="4" fill="#9a9a9a"/><rect x="316.4" y="887.3" width="1" height="4" fill="#9a9a9a"/><rect x="322.6" y="887.3" width="1" height="4" fill="#9a9a9a"/><rect x="328.8" y="887.3" width="1" height="4" fill="#9a9a9a"/><rect x="335.1" y="887.3" width="1" height="4" fill="#9a9a9a"/><rect x="341.3" y="887.3" width="1" height="4" fill="#9a9a9a"/><rect x="347.5" y="887.3" width="1" height="4" fill="#9a9a9a"/><rect x="353.7" y="887.3" width="1" height="4" fill="#9a9a9a"/><rect x="359.9" y="887.3" width="1" height="4" fill="#9a9a9a"/><rect x="366.1" y="887.3" width="1" height="4" fill="#9a9a9a"/><rect x="372.4" y="887.3" width="1" height="4" fill="#9a9a9a"/><rect x="378.6" y="887.3" width="1" height="4" fill="#9a9a9a"/><rect x="384.8" y="887.3" width="1" height="4" fill="#9a9a9a"/><rect x="391.0" y="887.3" width="1" height="4" fill="#9a9a9a"/><rect x="397.2" y="887.3" width="1" height="4" fill="#9a9a9a"/><rect x="403.5" y="887.3" width="1" height="4" fill="#9a9a9a"/><rect x="409.7" y="887.3" width="1" height="4" fill="#9a9a9a"/><rect x="415.9" y="887.3" width="1" height="4" fill="#9a9a9a"/><rect x="422.1" y="887.3" width="1" height="4" fill="#9a9a9a"/><rect x="428.3" y="887.3" width="1" height="4" fill="#9a9a9a"/><rect x="434.5" y="887.3" width="1" height="4" fill="#9a9a9a"/><rect x="440.8" y="887.3" width="1" height="4" fill="#9a9a9a"/><rect x="447.0" y="887.3" width="1" height="4" fill="#9a9a9a"/><rect x="453.2" y="887.3" width="1" height="4" fill="#9a9a9a"/><rect x="459.4" y="887.3" width="1" height="4" fill="#9a9a9a"/><rect x="465.6" y="887.3" width="1" height="4" fill="#9a9a9a"/><rect x="471.9" y="887.3" width="1" height="4" fill="#9a9a9a"/><rect x="478.1" y="887.3" width="1" height="4" fill="#9a9a9a"/><rect x="484.3" y="887.3" width="1" height="4" fill="#9a9a9a"/><rect x="490.5" y="887.3" width="1" height="4" fill="#9a9a9a"/><rect x="496.7" y="887.3" width="1" height="4" fill="#9a9a9a"/><rect x="502.9" y="887.3" width="1" height="4" fill="#9a9a9a"/><rect x="509.2" y="887.3" width="1" height="4" fill="#9a9a9a"/><rect x="515.4" y="887.3" width="1" height="4" fill="#9a9a9a"/><rect x="521.6" y="887.3" width="1" height="4" fill="#9a9a9a"/><rect x="527.8" y="887.3" width="1" height="4" fill="#9a9a9a"/><rect x="534.0" y="887.3" width="1" height="4" fill="#9a9a9a"/><rect x="540.2" y="887.3" width="1" height="4" fill="#9a9a9a"/><rect x="546.5" y="887.3" width="1" height="4" fill="#9a9a9a"/><rect x="552.7" y="887.3" width="1" height="4" fill="#9a9a9a"/><rect x="558.9" y="887.3" width="1" height="4" fill="#9a9a9a"/><rect x="565.1" y="887.3" width="1" height="4" fill="#9a9a9a"/><rect x="571.3" y="887.3" width="1" height="4" fill="#9a9a9a"/><rect x="577.6" y="887.3" width="1" height="4" fill="#9a9a9a"/><rect x="583.8" y="887.3" width="1" height="4" fill="#9a9a9a"/><rect x="590.0" y="887.3" width="1" height="4" fill="#9a9a9a"/><rect x="596.2" y="887.3" width="1" height="4" fill="#9a9a9a"/><rect x="602.4" y="887.3" width="1" height="4" fill="#9a9a9a"/><rect x="608.6" y="887.3" width="1" height="4" fill="#9a9a9a"/><rect x="614.9" y="887.3" width="1" height="4" fill="#9a9a9a"/><rect x="621.1" y="887.3" width="1" height="4" fill="#9a9a9a"/><rect x="627.3" y="887.3" width="1" height="4" fill="#9a9a9a"/><rect x="633.5" y="887.3" width="1" height="4" fill="#9a9a9a"/><rect x="639.7" y="887.3" width="1" height="4" fill="#9a9a9a"/><rect x="646.0" y="887.3" width="1" height="4" fill="#9a9a9a"/><rect x="652.2" y="887.3" width="1" height="4" fill="#9a9a9a"/><rect x="658.4" y="887.3" width="1" height="4" fill="#9a9a9a"/><rect x="664.6" y="887.3" width="1" height="4" fill="#9a9a9a"/><rect x="670.8" y="887.3" width="1" height="4" fill="#9a9a9a"/><rect x="677.0" y="887.3" width="1" height="4" fill="#9a9a9a"/><rect x="683.3" y="887.3" width="1" height="4" fill="#9a9a9a"/><rect x="689.5" y="887.3" width="1" height="4" fill="#9a9a9a"/><rect x="695.7" y="887.3" width="1" height="4" fill="#9a9a9a"/><rect x="701.9" y="887.3" width="1" height="4" fill="#9a9a9a"/><rect x="708.1" y="887.3" width="1" height="4" fill="#9a9a9a"/><rect x="714.4" y="887.3" width="1" height="4" fill="#9a9a9a"/><rect x="720.6" y="887.3" width="1" height="4" fill="#9a9a9a"/><rect x="726.8" y="887.3" width="1" height="4" fill="#9a9a9a"/><rect x="733.0" y="887.3" width="1" height="4" fill="#9a9a9a"/><rect x="739.2" y="887.3" width="1" height="4" fill="#9a9a9a"/><rect x="745.4" y="887.3" width="1" height="4" fill="#9a9a9a"/><rect x="751.7" y="887.3" width="1" height="4" fill="#9a9a9a"/><rect x="757.9" y="887.3" width="1" height="4" fill="#9a9a9a"/><rect x="764.1" y="887.3" width="1" height="4" fill="#9a9a9a"/><rect x="770.3" y="887.3" width="1" height="4" fill="#9a9a9a"/><rect x="776.5" y="887.3" width="1" height="4" fill="#9a9a9a"/><rect x="782.8" y="887.3" width="1" height="4" fill="#9a9a9a"/><rect x="789.0" y="887.3" width="1" height="4" fill="#9a9a9a"/><rect x="795.2" y="887.3" width="1" height="4" fill="#9a9a9a"/><rect x="801.4" y="887.3" width="1" height="4" fill="#9a9a9a"/><rect x="807.6" y="887.3" width="1" height="4" fill="#9a9a9a"/><rect x="813.8" y="887.3" width="1" height="4" fill="#9a9a9a"/><rect x="820.1" y="887.3" width="1" height="4" fill="#9a9a9a"/><rect x="826.3" y="887.3" width="1" height="4" fill="#9a9a9a"/><rect x="832.5" y="887.3" width="1" height="4" fill="#9a9a9a"/><rect x="838.7" y="887.3" width="1" height="4" fill="#9a9a9a"/><rect x="844.9" y="887.3" width="1" height="4" fill="#9a9a9a"/><rect x="851.1" y="887.3" width="1" height="4" fill="#9a9a9a"/><rect x="857.4" y="887.3" width="1" height="4" fill="#9a9a9a"/><rect x="863.6" y="887.3" width="1" height="4" fill="#9a9a9a"/><rect x="869.8" y="887.3" width="1" height="4" fill="#9a9a9a"/><rect x="876.0" y="887.3" width="1" height="4" fill="#9a9a9a"/><rect x="882.2" y="887.3" width="1" height="4" fill="#9a9a9a"/><rect x="888.5" y="887.3" width="1" height="4" fill="#9a9a9a"/><rect x="894.7" y="887.3" width="1" height="4" fill="#9a9a9a"/><rect x="900.9" y="887.3" width="1" height="4" fill="#9a9a9a"/><rect x="907.1" y="887.3" width="1" height="4" fill="#9a9a9a"/><rect x="913.3" y="887.3" width="1" height="4" fill="#9a9a9a"/><rect x="919.5" y="887.3" width="1" height="4" fill="#9a9a9a"/><rect x="925.8" y="887.3" width="1" height="4" fill="#9a9a9a"/><rect x="932.0" y="887.3" width="1" height="4" fill="#9a9a9a"/><rect x="938.2" y="887.3" width="1" height="4" fill="#9a9a9a"/><rect x="944.4" y="887.3" width="1" height="4" fill="#9a9a9a"/><rect x="950.6" y="887.3" width="1" height="4" fill="#9a9a9a"/><rect x="956.9" y="887.3" width="1" height="4" fill="#9a9a9a"/><rect x="963.1" y="887.3" width="1" height="4" fill="#9a9a9a"/><rect x="969.3" y="887.3" width="1" height="4" fill="#9a9a9a"/><rect x="975.5" y="887.3" width="1" height="4" fill="#9a9a9a"/><rect x="981.7" y="887.3" width="1" height="4" fill="#9a9a9a"/><rect x="987.9" y="887.3" width="1" height="4" fill="#9a9a9a"/><rect x="994.2" y="887.3" width="1" height="4" fill="#9a9a9a"/><rect x="1000.4" y="887.3" width="1" height="4" fill="#9a9a9a"/><rect x="1006.6" y="887.3" width="1" height="4" fill="#9a9a9a"/><rect x="1012.8" y="887.3" width="1" height="4" fill="#9a9a9a"/><rect x="1019.0" y="887.3" width="1" height="4" fill="#9a9a9a"/><rect x="1025.3" y="887.3" width="1" height="4" fill="#9a9a9a"/><rect x="1031.5" y="887.3" width="1" height="4" fill="#9a9a9a"/><rect x="1037.7" y="887.3" width="1" height="4" fill="#9a9a9a"/><rect x="1043.9" y="887.3" width="1" height="4" fill="#9a9a9a"/><rect x="1050.1" y="887.3" width="1" height="4" fill="#9a9a9a"/><rect x="1056.3" y="887.3" width="1" height="4" fill="#9a9a9a"/><rect x="1062.6" y="887.3" width="1" height="4" fill="#9a9a9a"/><rect x="1068.8" y="887.3" width="1" height="4" fill="#9a9a9a"/><rect x="1075.0" y="887.3" width="1" height="4" fill="#9a9a9a"/><rect x="1081.2" y="887.3" width="1" height="4" fill="#9a9a9a"/><rect x="1087.4" y="887.3" width="1" height="4" fill="#9a9a9a"/><rect x="1093.7" y="887.3" width="1" height="4" fill="#9a9a9a"/><rect x="1099.9" y="887.3" width="1" height="4" fill="#9a9a9a"/><rect x="1106.1" y="887.3" width="1" height="4" fill="#9a9a9a"/><rect x="1112.3" y="887.3" width="1" height="4" fill="#9a9a9a"/><rect x="1118.5" y="887.3" width="1" height="4" fill="#9a9a9a"/><rect x="1124.7" y="887.3" width="1" height="4" fill="#9a9a9a"/><rect x="1131.0" y="887.3" width="1" height="4" fill="#9a9a9a"/><rect x="1137.2" y="887.3" width="1" height="4" fill="#9a9a9a"/><rect x="1143.4" y="887.3" width="1" height="4" fill="#9a9a9a"/><rect x="1149.6" y="887.3" width="1" height="4" fill="#9a9a9a"/><rect x="1155.8" y="887.3" width="1" height="4" fill="#9a9a9a"/><rect x="1162.1" y="887.3" width="1" height="4" fill="#9a9a9a"/><rect x="1168.3" y="887.3" width="1" height="4" fill="#9a9a9a"/><rect x="1174.5" y="887.3" width="1" height="4" fill="#9a9a9a"/><rect x="1180.7" y="887.3" width="1" height="4" fill="#9a9a9a"/><rect x="1186.9" y="887.3" width="1" height="4" fill="#9a9a9a"/><rect x="1193.1" y="887.3" width="1" height="4" fill="#9a9a9a"/><rect x="1199.4" y="887.3" width="1" height="4" fill="#9a9a9a"/><rect x="1205.6" y="887.3" width="1" height="4" fill="#9a9a9a"/><rect x="1211.8" y="887.3" width="1" height="4" fill="#9a9a9a"/><rect x="1218.0" y="887.3" width="1" height="4" fill="#9a9a9a"/><rect x="1224.2" y="887.3" width="1" height="4" fill="#9a9a9a"/><rect x="1230.4" y="887.3" width="1" height="4" fill="#9a9a9a"/><rect x="1236.7" y="887.3" width="1" height="4" fill="#9a9a9a"/><rect x="1242.9" y="887.3" width="1" height="4" fill="#9a9a9a"/><rect x="1249.1" y="887.3" width="1" height="4" fill="#9a9a9a"/><rect x="1255.3" y="887.3" width="1" height="4" fill="#9a9a9a"/><rect x="1261.5" y="887.3" width="1" height="4" fill="#9a9a9a"/><rect x="1267.8" y="887.3" width="1" height="4" fill="#9a9a9a"/><rect x="1274.0" y="887.3" width="1" height="4" fill="#9a9a9a"/><rect x="1280.2" y="887.3" width="1" height="4" fill="#9a9a9a"/><rect x="1286.4" y="887.3" width="1" height="4" fill="#9a9a9a"/><rect x="1292.6" y="887.3" width="1" height="4" fill="#9a9a9a"/><rect x="1298.8" y="887.3" width="1" height="4" fill="#9a9a9a"/><rect x="1305.1" y="887.3" width="1" height="4" fill="#9a9a9a"/><rect x="1311.3" y="887.3" width="1" height="4" fill="#9a9a9a"/><rect x="1317.5" y="887.3" width="1" height="4" fill="#9a9a9a"/><rect x="1323.7" y="887.3" width="1" height="4" fill="#9a9a9a"/><rect x="1329.9" y="887.3" width="1" height="4" fill="#9a9a9a"/><rect x="1336.2" y="887.3" width="1" height="4" fill="#9a9a9a"/><rect x="1342.4" y="887.3" width="1" height="4" fill="#9a9a9a"/><rect x="1348.6" y="887.3" width="1" height="4" fill="#9a9a9a"/><rect x="1354.8" y="887.3" width="1" height="4" fill="#9a9a9a"/><rect x="1361.0" y="887.3" width="1" height="4" fill="#9a9a9a"/><rect x="1367.2" y="887.3" width="1" height="4" fill="#9a9a9a"/><rect x="1373.5" y="887.3" width="1" height="4" fill="#9a9a9a"/><rect x="1379.7" y="887.3" width="1" height="4" fill="#9a9a9a"/></g>
<rect x="73.9" y="865.5" width="1" height="25.5" fill="#b0b0b0"/>
<rect x="260.4" y="865.5" width="1" height="25.5" fill="#b0b0b0"/>
<rect x="447.0" y="865.5" width="1" height="25.5" fill="#b0b0b0"/>
<rect x="633.5" y="865.5" width="1" height="25.5" fill="#b0b0b0"/>
<rect x="820.1" y="865.5" width="1" height="25.5" fill="#b0b0b0"/>
<rect x="1006.6" y="865.5" width="1" height="25.5" fill="#b0b0b0"/>
<rect x="1193.1" y="865.5" width="1" height="25.5" fill="#b0b0b0"/>
<rect x="1379.7" y="865.5" width="1" height="25.5" fill="#b0b0b0"/>
<text x="74.4" y="878" font-family="Liberation Sans" font-size="13" fill="#c8c8c8" text-anchor="middle">0</text>
<text x="150.4" y="878" font-family="Liberation Sans" font-size="13" fill="#6f74c8" text-anchor="middle">10</text>
<text x="198.8" y="878" font-family="Liberation Sans" font-size="13" fill="#c8c8c8" text-anchor="middle">20</text>
<text x="260.9" y="878" font-family="Liberation Sans" font-size="13" fill="#c8c8c8" text-anchor="middle">30</text>
<text x="323.1" y="878" font-family="Liberation Sans" font-size="13" fill="#c8c8c8" text-anchor="middle">40</text>
<text x="385.3" y="878" font-family="Liberation Sans" font-size="13" fill="#c8c8c8" text-anchor="middle">50</text>
<text x="447.5" y="878" font-family="Liberation Sans" font-size="13" fill="#c8c8c8" text-anchor="middle">60</text>
<text x="509.7" y="878" font-family="Liberation Sans" font-size="13" fill="#c8c8c8" text-anchor="middle">70</text>
<text x="571.8" y="878" font-family="Liberation Sans" font-size="13" fill="#c8c8c8" text-anchor="middle">80</text>
<text x="634.0" y="878" font-family="Liberation Sans" font-size="13" fill="#c8c8c8" text-anchor="middle">90</text>
<text x="696.2" y="878" font-family="Liberation Sans" font-size="13" fill="#c8c8c8" text-anchor="middle">100</text>
<text x="758.4" y="878" font-family="Liberation Sans" font-size="13" fill="#c8c8c8" text-anchor="middle">110</text>
<text x="820.6" y="878" font-family="Liberation Sans" font-size="13" fill="#c8c8c8" text-anchor="middle">120</text>
<text x="882.7" y="878" font-family="Liberation Sans" font-size="13" fill="#c8c8c8" text-anchor="middle">130</text>
<text x="944.9" y="878" font-family="Liberation Sans" font-size="13" fill="#c8c8c8" text-anchor="middle">140</text>
<text x="1007.1" y="878" font-family="Liberation Sans" font-size="13" fill="#c8c8c8" text-anchor="middle">150</text>
<text x="1069.3" y="878" font-family="Liberation Sans" font-size="13" fill="#c8c8c8" text-anchor="middle">160</text>
<text x="1131.5" y="878" font-family="Liberation Sans" font-size="13" fill="#c8c8c8" text-anchor="middle">170</text>
<text x="1193.6" y="878" font-family="Liberation Sans" font-size="13" fill="#c8c8c8" text-anchor="middle">180</text>
<text x="1255.8" y="878" font-family="Liberation Sans" font-size="13" fill="#c8c8c8" text-anchor="middle">190</text>
<text x="1318.0" y="878" font-family="Liberation Sans" font-size="13" fill="#c8c8c8" text-anchor="middle">200</text>
<text x="1380.2" y="878" font-family="Liberation Sans" font-size="13" fill="#c8c8c8" text-anchor="middle">210</text>
<rect x="135" y="884" width="1" height="7" fill="#9a9a9a"/>
<g fill="#6a6a6a"><rect x="165.5" y="900" width="1" height="13"/><rect x="168.5" y="900" width="1" height="13"/><rect x="1286" y="900" width="1" height="13"/><rect x="1289" y="900" width="1" height="13"/></g>
<rect x="6" y="928.8" width="18" height="2.4" fill="#a9a9a9"/>
<rect x="6" y="933.8" width="18" height="2.4" fill="#a9a9a9"/>
<rect x="6" y="938.8" width="18" height="2.4" fill="#a9a9a9"/>
<circle cx="45" cy="935.5" r="8" fill="none" stroke="#a9a9a9" stroke-width="1.8"/><polyline points="40.5,935.5 44,939 51,930" fill="none" stroke="#a9a9a9" stroke-width="1.8"/>
<g fill="#4e4e4e"><rect x="4" y="36.5" width="1.6" height="1.6"/><rect x="4" y="40.5" width="1.6" height="1.6"/><rect x="8" y="36.5" width="1.6" height="1.6"/><rect x="8" y="40.5" width="1.6" height="1.6"/><rect x="12" y="36.5" width="1.6" height="1.6"/><rect x="12" y="40.5" width="1.6" height="1.6"/><rect x="16" y="36.5" width="1.6" height="1.6"/><rect x="16" y="40.5" width="1.6" height="1.6"/><rect x="20" y="36.5" width="1.6" height="1.6"/><rect x="20" y="40.5" width="1.6" height="1.6"/><rect x="24" y="36.5" width="1.6" height="1.6"/><rect x="24" y="40.5" width="1.6" height="1.6"/><rect x="28" y="36.5" width="1.6" height="1.6"/><rect x="28" y="40.5" width="1.6" height="1.6"/><rect x="32" y="36.5" width="1.6" height="1.6"/><rect x="32" y="40.5" width="1.6" height="1.6"/><rect x="36" y="36.5" width="1.6" height="1.6"/><rect x="36" y="40.5" width="1.6" height="1.6"/><rect x="40" y="36.5" width="1.6" height="1.6"/><rect x="40" y="40.5" width="1.6" height="1.6"/><rect x="47" y="41" width="1.6" height="1.6"/><rect x="51" y="41" width="1.6" height="1.6"/><rect x="47" y="45" width="1.6" height="1.6"/><rect x="51" y="45" width="1.6" height="1.6"/><rect x="47" y="49" width="1.6" height="1.6"/><rect x="51" y="49" width="1.6" height="1.6"/><rect x="47" y="53" width="1.6" height="1.6"/><rect x="51" y="53" width="1.6" height="1.6"/><rect x="47" y="57" width="1.6" height="1.6"/><rect x="51" y="57" width="1.6" height="1.6"/><rect x="47" y="61" width="1.6" height="1.6"/><rect x="51" y="61" width="1.6" height="1.6"/><rect x="47" y="65" width="1.6" height="1.6"/><rect x="51" y="65" width="1.6" height="1.6"/><rect x="1404" y="36.5" width="1.6" height="1.6"/><rect x="1404" y="40.5" width="1.6" height="1.6"/><rect x="1408" y="36.5" width="1.6" height="1.6"/><rect x="1408" y="40.5" width="1.6" height="1.6"/><rect x="1412" y="36.5" width="1.6" height="1.6"/><rect x="1412" y="40.5" width="1.6" height="1.6"/><rect x="1416" y="36.5" width="1.6" height="1.6"/><rect x="1416" y="40.5" width="1.6" height="1.6"/><rect x="1420" y="36.5" width="1.6" height="1.6"/><rect x="1420" y="40.5" width="1.6" height="1.6"/><rect x="1424" y="36.5" width="1.6" height="1.6"/><rect x="1424" y="40.5" width="1.6" height="1.6"/><rect x="1428" y="36.5" width="1.6" height="1.6"/><rect x="1428" y="40.5" width="1.6" height="1.6"/><rect x="1432" y="36.5" width="1.6" height="1.6"/><rect x="1432" y="40.5" width="1.6" height="1.6"/><rect x="1436" y="36.5" width="1.6" height="1.6"/><rect x="1436" y="40.5" width="1.6" height="1.6"/><rect x="1440" y="36.5" width="1.6" height="1.6"/><rect x="1440" y="40.5" width="1.6" height="1.6"/></g>
<g fill="none" stroke="#c8c8c8" stroke-width="2"><rect x="64" y="43" width="20" height="5.5" rx="1.5"/><path d="M65.5,48.5 V62 H82.5 V48.5"/><line x1="71" y1="54" x2="77" y2="54"/></g>
<text x="121" y="58" font-family="Liberation Sans" font-size="18" fill="#c8c8c8" text-anchor="middle">X</text><rect x="111.5" y="61" width="19" height="2.2" rx="1" fill="#e05050"/>
<text x="156.4" y="58" font-family="Liberation Sans" font-size="18" fill="#c8c8c8" text-anchor="middle">Y</text><rect x="146.9" y="61" width="19" height="2.2" rx="1" fill="#50d070"/>
<text x="191" y="58" font-family="Liberation Sans" font-size="18" fill="#c8c8c8" text-anchor="middle">Z</text><rect x="181.5" y="61" width="19" height="2.2" rx="1" fill="#3a8ae8"/>
<g fill="none" stroke="#c8c8c8" stroke-width="1.6"><path d="M226.5,40 V47 M223.5,43 L226.5,40 L229.5,43"/><path d="M221,50 L226.5,47 L232,50 V56 L226.5,59 L221,56 Z"/><path d="M221,50 L226.5,53 L232,50 M226.5,53 V59"/><path d="M221,57 L215,62 M215,58 V62 H219"/><path d="M232,57 L238,62 M238,58 V62 H234"/></g>
<polygon points="468.5,63.0 459.8,58.0 459.8,48.0 468.5,43.0 477.2,48.0 477.2,58.0" fill="none" stroke="#c8c8c8" stroke-width="1.8"/><circle cx="468.5" cy="53" r="2.6" fill="#c8c8c8"/>
<polygon points="503.5,63.0 494.8,58.0 494.8,48.0 503.5,43.0 512.2,48.0 512.2,58.0" fill="none" stroke="#c8c8c8" stroke-width="1.8"/><line x1="503.5" y1="53" x2="503.5" y2="63" stroke="#c8c8c8" stroke-width="2.5"/>
<polygon points="538.5,63.0 529.8,58.0 529.8,48.0 538.5,43.0 547.2,48.0 547.2,58.0" fill="none" stroke="#c8c8c8" stroke-width="1.8"/><path d="M538.5,53 L547,48 V58 L538.5,63 Z" fill="#f0f0f0"/>
<polygon points="573.5,63.0 564.8,58.0 564.8,48.0 573.5,43.0 582.2,48.0 582.2,58.0" fill="#7d7d7d" stroke="#f0f0f0" stroke-width="2"/><path d="M573.5,53 L582,48 V58 L573.5,63 Z" fill="#9a9a9a"/><path d="M573.5,53 L565,48 L573.5,43 L582,48 Z" fill="#bdbdbd"/>
<path d="M600,47 L608.5,42 L617,47 V52 L608.5,57 L600,52 Z" fill="#a0a0a0"/><path d="M600,47 V59 L608.5,64 V52 Z" fill="#c8c8c8"/><g fill="#f0f0f0"><rect x="610" y="53" width="5" height="5"/><rect x="615" y="57" width="4" height="4"/><rect x="610" y="58" width="4" height="4"/></g>
<g fill="none" stroke="#c8c8c8" stroke-width="2"><path d="M656,53 V42 M652,46 L656,42 L660,46"/><path d="M656,53 L646,60 M646,55 V60 H651"/><path d="M656,53 L666,60 M666,55 V60 H661"/></g>
<path d="M715,48 V55 A7,7 0 0 0 729,55 V48 H725 V55 A3,3 0 0 1 719,55 V48 Z" fill="#c8c8c8"/><path d="M717,45 L723,42.5 L721.5,45.5 L729,45 L719.5,49 L721,46.5 Z" fill="#c8c8c8"/>
<polygon points="761.24,54.18 763.33,54.39 763.33,57.61 761.24,57.82 760.99,58.42 762.32,60.04 760.04,62.32 758.42,60.99 757.82,61.24 757.61,63.33 754.39,63.33 754.18,61.24 753.58,60.99 751.96,62.32 749.68,60.04 751.01,58.42 750.76,57.82 748.67,57.61 748.67,54.39 750.76,54.18 751.01,53.58 749.68,51.96 751.96,49.68 753.58,51.01 754.18,50.76 754.39,48.67 757.61,48.67 757.82,50.76 758.42,51.01 760.04,49.68 762.32,51.96 760.99,53.58" fill="#c8c8c8"/><circle cx="756" cy="56" r="2.70" fill="#3a3a3a"/>
<path d="M749,44 L756,42 L754.5,44.5 L762,44.5 L752,48.5 L754,45.5 Z" fill="#c8c8c8"/>
<path d="M730,66 L734,62 L734,66 Z" fill="#a0a0a0"/>
<g stroke="#c8c8c8" stroke-width="2.2"><line x1="797" y1="43" x2="797" y2="63"/><line x1="806" y1="43" x2="806" y2="63"/><line x1="793" y1="48" x2="811" y2="48"/><line x1="793" y1="57" x2="811" y2="57"/></g>
<g stroke="#e8e8e8" stroke-width="2.2"><line x1="832" y1="43" x2="832" y2="63"/><line x1="841" y1="43" x2="841" y2="55"/><line x1="828" y1="48" x2="846" y2="48"/><line x1="828" y1="57" x2="837" y2="57"/></g><rect x="840" y="57" width="8" height="6" rx="1" fill="#e8e8e8"/><path d="M841.5,57 V55 A2.5,2.5 0 0 1 846.5,55 V57" fill="none" stroke="#e8e8e8" stroke-width="1.4"/>
<g fill="none" stroke="#5e5e5e" stroke-width="1.6"><circle cx="886" cy="53" r="10"/><circle cx="886" cy="53" r="6.5"/></g><circle cx="886" cy="53" r="3.5" fill="#5e5e5e"/>
<circle cx="921.5" cy="53" r="10.5" fill="none" stroke="#c8c8c8" stroke-width="1.8"/>
<polygon points="926.04,51.42 927.85,51.61 927.85,54.39 926.04,54.58 925.83,55.10 926.97,56.50 925.00,58.47 923.60,57.33 923.08,57.54 922.89,59.35 920.11,59.35 919.92,57.54 919.40,57.33 918.00,58.47 916.03,56.50 917.17,55.10 916.96,54.58 915.15,54.39 915.15,51.61 916.96,51.42 917.17,50.90 916.03,49.50 918.00,47.53 919.40,48.67 919.92,48.46 920.11,46.65 922.89,46.65 923.08,48.46 923.60,48.67 925.00,47.53 926.97,49.50 925.83,50.90" fill="#c8c8c8"/><circle cx="921.5" cy="53" r="2.34" fill="#3a3a3a"/>
<g fill="none" stroke="#c8c8c8" stroke-width="1.5"><path d="M966,47 C963,44 959,44 959,47 C959,50 962,52 964,53 C961,55 961,60 964,60 C966,60 966,58 966,56 Z"/></g><path d="M970,47 C973,44 978,43 978,47 C978,50 975,52 973,53 C976,55 976,60 972,60 C970,60 970,58 970,56 Z" fill="#c8c8c8"/><rect x="967.2" y="42" width="1.8" height="20" fill="#c8c8c8"/>
<path d="M993,45 C989,49 989,57 993,61" fill="none" stroke="#c8c8c8" stroke-width="2"/>
<polygon points="1011.24,51.18 1013.33,51.39 1013.33,54.61 1011.24,54.82 1010.99,55.42 1012.32,57.04 1010.04,59.32 1008.42,57.99 1007.82,58.24 1007.61,60.33 1004.39,60.33 1004.18,58.24 1003.58,57.99 1001.96,59.32 999.68,57.04 1001.01,55.42 1000.76,54.82 998.67,54.61 998.67,51.39 1000.76,51.18 1001.01,50.58 999.68,48.96 1001.96,46.68 1003.58,48.01 1004.18,47.76 1004.39,45.67 1007.61,45.67 1007.82,47.76 1008.42,48.01 1010.04,46.68 1012.32,48.96 1010.99,50.58" fill="#c8c8c8"/><circle cx="1006" cy="53" r="2.70" fill="#3a3a3a"/>
<g fill="none" stroke="#c8c8c8" stroke-width="2"><rect x="1249" y="44" width="19" height="18"/></g><g fill="#3a3a3a" stroke="#c8c8c8" stroke-width="1.5"><rect x="1246.5" y="41.5" width="5" height="5"/><rect x="1265.5" y="41.5" width="5" height="5"/><rect x="1246.5" y="59.5" width="5" height="5"/><rect x="1265.5" y="59.5" width="5" height="5"/></g>
<g fill="#c8c8c8"><rect x="1282" y="47" width="22" height="15" rx="1"/><path d="M1282,42 L1304,42 L1304,46 L1282,46 Z"/></g><path d="M1290,50 L1297,54.5 L1290,59 Z" fill="#3a3a3a"/><g fill="#3a3a3a"><rect x="1287" y="42" width="2.5" height="4"/><rect x="1293" y="42" width="2.5" height="4"/><rect x="1299" y="42" width="2.5" height="4"/></g>
<g fill="#c8c8c8"><rect x="1317" y="47" width="22" height="15" rx="1"/><path d="M1317,42 L1339,42 L1339,46 L1317,46 Z"/></g><g fill="#3a3a3a"><rect x="1322" y="42" width="2.5" height="4"/><rect x="1328" y="42" width="2.5" height="4"/><rect x="1334" y="42" width="2.5" height="4"/></g>
<polygon points="1331.85,53.17 1333.37,53.32 1333.37,55.68 1331.85,55.83 1331.66,56.28 1332.63,57.47 1330.97,59.13 1329.78,58.16 1329.33,58.35 1329.18,59.87 1326.82,59.87 1326.67,58.35 1326.22,58.16 1325.03,59.13 1323.37,57.47 1324.34,56.28 1324.15,55.83 1322.63,55.68 1322.63,53.32 1324.15,53.17 1324.34,52.72 1323.37,51.53 1325.03,49.87 1326.22,50.84 1326.67,50.65 1326.82,49.13 1329.18,49.13 1329.33,50.65 1329.78,50.84 1330.97,49.87 1332.63,51.53 1331.66,52.72" fill="#3a3a3a"/><circle cx="1328" cy="54.5" r="1.98" fill="#c8c8c8"/>
<path d="M1271,69 L1276,64 L1276,69 Z" fill="#a0a0a0"/>
<path d="M1306,69 L1311,64 L1311,69 Z" fill="#a0a0a0"/>
<path d="M1340,69 L1345,64 L1345,69 Z" fill="#a0a0a0"/>
<circle cx="1376.5" cy="51" r="8.5" fill="none" stroke="#d8d8d8" stroke-width="1.8"/><path d="M1368,57 C1369,63 1384,63 1385,57" fill="none" stroke="#d8d8d8" stroke-width="1.8"/><path d="M1371.5,49 A5,5 0 0 1 1376,45" fill="none" stroke="#d8d8d8" stroke-width="1.4"/>
<path d="M585,69 L590,64 L590,69 Z" fill="#a0a0a0"/>
<path d="M850,69 L855,64 L855,69 Z" fill="#a0a0a0"/>
<g fill="none" stroke="#c8c8c8" stroke-width="2.2"><circle cx="19.5" cy="90" r="9"/><line x1="26" y1="96.5" x2="34" y2="104.5"/></g>
<rect x="9" y="136" width="26" height="26" rx="3" fill="none" stroke="#f0a030" stroke-width="2.4" stroke-dasharray="4 3"/><path d="M19,141 L30,151 L24,151.5 L19,157 Z" fill="#c8c8c8"/><path d="M43,164 L43,171 L36,171 Z" fill="#a0a0a0"/>
<polygon points="19.74,185.68 21.83,185.89 21.83,189.11 19.74,189.32 19.49,189.92 20.82,191.54 18.54,193.82 16.92,192.49 16.32,192.74 16.11,194.83 12.89,194.83 12.68,192.74 12.08,192.49 10.46,193.82 8.18,191.54 9.51,189.92 9.26,189.32 7.17,189.11 7.17,185.89 9.26,185.68 9.51,185.08 8.18,183.46 10.46,181.18 12.08,182.51 12.68,182.26 12.89,180.17 16.11,180.17 16.32,182.26 16.92,182.51 18.54,181.18 20.82,183.46 19.49,185.08" fill="#c8c8c8"/><circle cx="14.5" cy="187.5" r="2.70" fill="#3b3b3b"/>
<path d="M26,193 L37,205 L30.5,205 L26,211 Z" fill="#c8c8c8"/>
<g fill="none" stroke="#c8c8c8" stroke-width="2"><line x1="22" y1="240" x2="22" y2="266"/><line x1="9" y1="253" x2="35" y2="253"/><polyline points="18,244 22,240 26,244"/><polyline points="18,262 22,266 26,262"/><polyline points="13,249 9,253 13,257"/><polyline points="31,249 35,253 31,257"/></g>
<g fill="none" stroke="#c8c8c8" stroke-width="2.2"><path d="M22,284.5 A13.5,13.5 0 0 0 14.5,308.5"/><polyline points="8.4,310.6 16.9,310.6 16.9,303"/><path d="M23,311.8 A13.5,13.5 0 0 0 31,287.5"/><polyline points="36.5,284.8 28.6,284.8 28.6,292.3"/></g>
<g fill="none" stroke="#c8c8c8" stroke-width="2.2"><path d="M9.5,341 V332 A2,2 0 0 1 11.5,330 H34 A2,2 0 0 1 36,332 V353 A2,2 0 0 1 34,355 H24"/><polyline points="19.5,339.5 27,339.5 27,347"/></g><rect x="8.5" y="344.5" width="12" height="12" rx="2.5" fill="#c8c8c8"/>
<path d="M21.5,405 L25.5,396.5 L31.5,390 L37.5,394.5 L36,401 L26.5,406 Z" fill="#c8c8c8"/><circle cx="30" cy="397.5" r="1.7" fill="#3b3b3b"/><line x1="22.5" y1="404.5" x2="29.5" y2="398" stroke="#3b3b3b" stroke-width="1"/>
<path d="M21.5,455 L25.5,446.5 L31.5,440 L37.5,444.5 L36,451 L26.5,456 Z" fill="#c8c8c8"/><circle cx="30" cy="447.5" r="1.7" fill="#3b3b3b"/><line x1="22.5" y1="454.5" x2="29.5" y2="448" stroke="#3b3b3b" stroke-width="1"/>
<circle cx="9.5" cy="412.5" r="2.8" fill="#f0a030"/><circle cx="35" cy="412.5" r="2.8" fill="#f0a030"/><path d="M12.5,415.5 Q22.5,423 32.5,415.5" fill="none" stroke="#c8c8c8" stroke-width="2"/>
<g fill="#f0a030"><rect x="8" y="467.8" width="3" height="3"/><rect x="13.5" y="467.8" width="18" height="3"/><rect x="34" y="467.8" width="3" height="3"/></g>
<path d="M43,419 L43,426 L36,426 Z" fill="#a0a0a0"/>
<path d="M43,469 L43,476 L36,476 Z" fill="#a0a0a0"/>
</svg>
<div style="position:absolute;left:50.4px;top:103.3px;width:31.300000000000004px;height:18.5px;background:#2c2c2c;border-radius:3px;"></div>
<div class="t " style="left:52.9px;top:103.05px;color:#d6d6d6;font-size:12.5px;">透視</div>
<div style="position:absolute;left:329.6px;top:104px;width:107px;height:17.6px;background:rgba(40,40,40,0.4);border-radius:3px;"></div>
<div class="t " style="left:332px;top:103.3px;color:#d6d6d6;font-size:13px;"><i class="kc">デ</i><i class="kc">フ</i><i class="kc">ォ</i><i class="kc">ル</i><i class="kc">ト</i><i class="kc">カ</i><i class="kc">メ</i><i class="kc">ラ</i></div>
<svg style="position:absolute;left:410px;top:100px" width="30" height="25"><g fill="none" stroke="#9aa6c8" stroke-width="1.4"><path d="M8.5,18 V8 H14.5 V11"/><path d="M8.5,18 H19"/></g><rect x="15" y="13" width="6" height="6" fill="#1e1e1e"/><path d="M17,11 L21,8.5 V12 Z" fill="#9aa6c8"/></svg>
<div style="position:absolute;left:728.2px;top:104px;width:31.299999999999955px;height:17.599999999999994px;background:rgba(40,40,40,0.4);border-radius:3px;"></div>
<div class="t " style="left:730.7px;top:103.3px;color:#d6d6d6;font-size:12.5px;">上面</div>
<div style="position:absolute;left:48.6px;top:477px;width:34.4px;height:18px;background:rgba(40,40,40,0.4);border-radius:3px;"></div>
<div class="t " style="left:51.1px;top:476.5px;color:#d6d6d6;font-size:12.5px;">右面</div>
<div style="position:absolute;left:728.4px;top:477.2px;width:31.300000000000068px;height:17.100000000000023px;background:rgba(40,40,40,0.4);border-radius:3px;"></div>
<div class="t " style="left:730.9px;top:476.25px;color:#d6d6d6;font-size:12.5px;">前面</div>
<div style="position:absolute;left:562.8px;top:418.7px;width:152.4000000000001px;height:17.69999999999999px;background:rgba(40,40,40,0.35);border-radius:3px;"></div>
<div class="t" style="right:1201.8px;top:418.84999999999997px;color:#dcdcdc;font-size:13.5px;"><i class="kc">グ</i><i class="kc">リ</i><i class="kc">ッ</i><i class="kc">ド</i>間隔 : 500000 mm</div>
<div style="position:absolute;left:1253.8px;top:419.6px;width:138.20000000000005px;height:16.399999999999977px;background:rgba(40,40,40,0.35);border-radius:3px;"></div>
<div class="t" style="right:525px;top:419.1px;color:#dcdcdc;font-size:13.5px;"><i class="kc">グ</i><i class="kc">リ</i><i class="kc">ッ</i><i class="kc">ド</i>間隔 : 500 mm</div>
<div style="position:absolute;left:585.4px;top:791px;width:130.10000000000002px;height:17.600000000000023px;background:rgba(40,40,40,0.35);border-radius:3px;"></div>
<div class="t" style="right:1201.5px;top:791.0999999999999px;color:#dcdcdc;font-size:13.5px;"><i class="kc">グ</i><i class="kc">リ</i><i class="kc">ッ</i><i class="kc">ド</i>間隔 : 500 mm</div>
<div style="position:absolute;left:1259.5px;top:791px;width:132.9000000000001px;height:17.600000000000023px;background:rgba(40,40,40,0.35);border-radius:3px;"></div>
<div class="t" style="right:524.5999999999999px;top:791.0999999999999px;color:#dcdcdc;font-size:13.5px;"><i class="kc">グ</i><i class="kc">リ</i><i class="kc">ッ</i><i class="kc">ド</i>間隔 : 500 mm</div>
<div style="position:absolute;left:1579.6px;top:425.4px;width:154.8px;height:22.3px;background:transparent;border:3px solid #f025d8;border-radius:12px;box-sizing:border-box;"></div>
<div style="position:absolute;left:1470.3px;top:800px;width:434.5px;height:58.3px;background:transparent;border:3px solid #f025d8;border-radius:12px;box-sizing:border-box;"></div>
</body></html>
